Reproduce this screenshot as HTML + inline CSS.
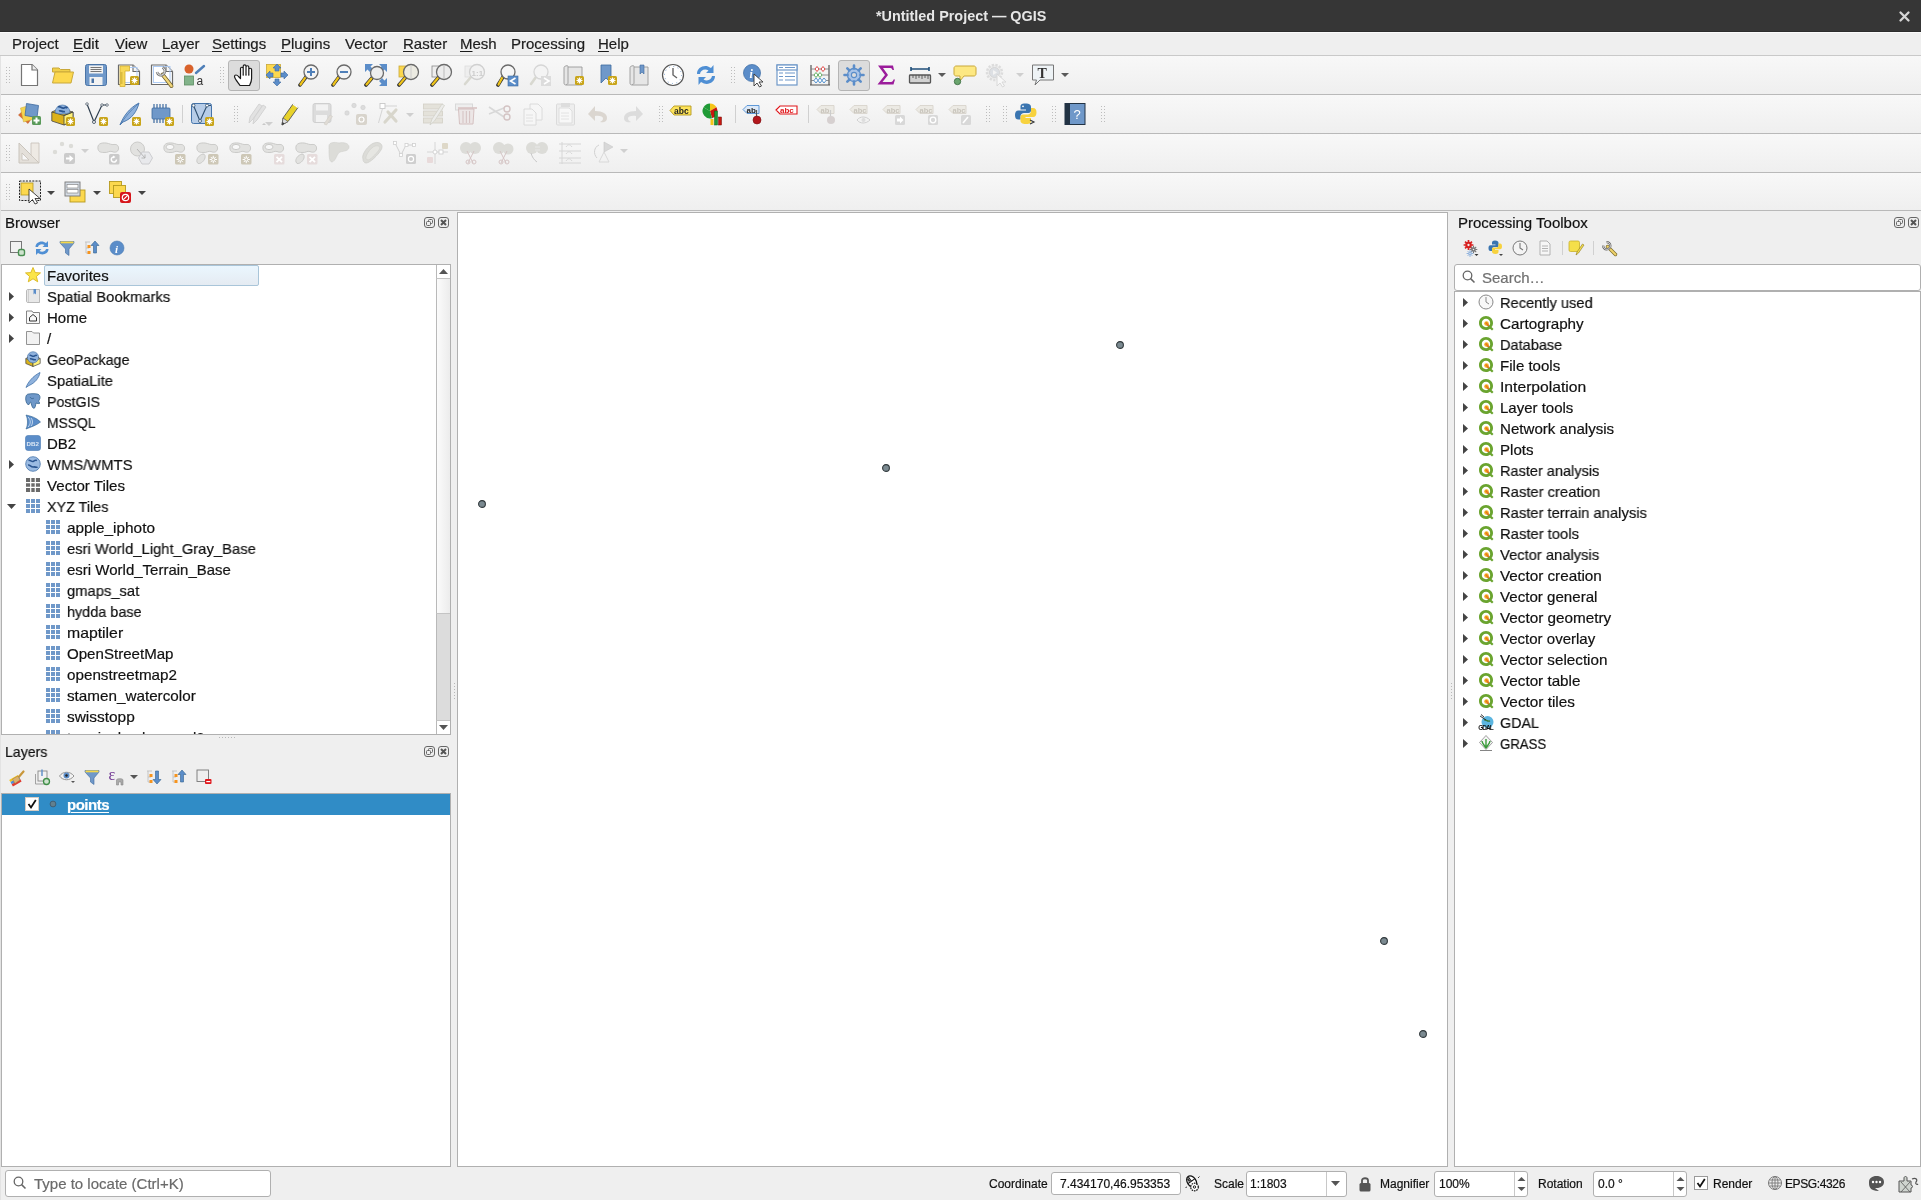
<!DOCTYPE html><html><head><meta charset="utf-8"><style>
html,body{margin:0;padding:0;width:1921px;height:1200px;overflow:hidden;background:#efefef;position:relative;font-family:"Liberation Sans", sans-serif;}
.t{position:absolute;white-space:nowrap;will-change:transform;-webkit-text-stroke:0.2px currentColor;}
svg{overflow:visible;will-change:transform}
</style></head><body>
<div style="position:absolute;left:0px;top:0px;width:1921px;height:31px;background:#363636"></div>
<div style="position:absolute;left:0px;top:31px;width:1921px;height:1px;background:#2c2c2c"></div>
<div style="position:absolute;left:0px;top:32px;width:1921px;height:1px;background:#fbfbfb"></div>
<div class="t" style="left:876px;top:8.61px;font-size:14.4px;line-height:14.4px;color:#e6e6e6;font-weight:700;-webkit-text-stroke:0;">*Untitled Project — QGIS</div>
<svg style="position:absolute;left:1899px;top:11px" width="11" height="11" viewBox="0 0 11 11"><path d="M1.5 1.5 L9.5 9.5 M9.5 1.5 L1.5 9.5" stroke="#d6d6d6" stroke-width="2.3" stroke-linecap="round"/></svg>
<div style="position:absolute;left:0px;top:33px;width:1921px;height:22px;background:#efefef"></div>
<div style="position:absolute;left:0px;top:55px;width:1921px;height:1px;background:#c9c9c9"></div>
<div class="t" style="left:12px;top:36.00px;font-size:15px;line-height:15px;color:#1c1c1c;font-weight:400;">Project</div>
<div class="t" style="left:73px;top:36.00px;font-size:15px;line-height:15px;color:#1c1c1c;font-weight:400;text-decoration-thickness:1px;text-underline-offset:2px;"><u>E</u>dit</div>
<div class="t" style="left:115px;top:36.00px;font-size:15px;line-height:15px;color:#1c1c1c;font-weight:400;text-decoration-thickness:1px;text-underline-offset:2px;"><u>V</u>iew</div>
<div class="t" style="left:162px;top:36.00px;font-size:15px;line-height:15px;color:#1c1c1c;font-weight:400;text-decoration-thickness:1px;text-underline-offset:2px;"><u>L</u>ayer</div>
<div class="t" style="left:212px;top:36.00px;font-size:15px;line-height:15px;color:#1c1c1c;font-weight:400;text-decoration-thickness:1px;text-underline-offset:2px;"><u>S</u>ettings</div>
<div class="t" style="left:281px;top:36.00px;font-size:15px;line-height:15px;color:#1c1c1c;font-weight:400;text-decoration-thickness:1px;text-underline-offset:2px;"><u>P</u>lugins</div>
<div class="t" style="left:345px;top:36.00px;font-size:15px;line-height:15px;color:#1c1c1c;font-weight:400;text-decoration-thickness:1px;text-underline-offset:2px;">Vect<u>o</u>r</div>
<div class="t" style="left:403px;top:36.00px;font-size:15px;line-height:15px;color:#1c1c1c;font-weight:400;text-decoration-thickness:1px;text-underline-offset:2px;"><u>R</u>aster</div>
<div class="t" style="left:460px;top:36.00px;font-size:15px;line-height:15px;color:#1c1c1c;font-weight:400;text-decoration-thickness:1px;text-underline-offset:2px;"><u>M</u>esh</div>
<div class="t" style="left:511px;top:36.00px;font-size:15px;line-height:15px;color:#1c1c1c;font-weight:400;text-decoration-thickness:1px;text-underline-offset:2px;">Pro<u>c</u>essing</div>
<div class="t" style="left:598px;top:36.00px;font-size:15px;line-height:15px;color:#1c1c1c;font-weight:400;text-decoration-thickness:1px;text-underline-offset:2px;"><u>H</u>elp</div>
<div style="position:absolute;left:0px;top:56px;width:1921px;height:38px;background:linear-gradient(#f8f8f8,#efefef)"></div>
<div style="position:absolute;left:0px;top:94px;width:1921px;height:1px;background:#b9b9b9"></div>
<div style="position:absolute;left:0px;top:95px;width:1921px;height:38px;background:linear-gradient(#f8f8f8,#efefef)"></div>
<div style="position:absolute;left:0px;top:133px;width:1921px;height:1px;background:#b9b9b9"></div>
<div style="position:absolute;left:0px;top:134px;width:1921px;height:38px;background:linear-gradient(#f8f8f8,#efefef)"></div>
<div style="position:absolute;left:0px;top:172px;width:1921px;height:1px;background:#b9b9b9"></div>
<div style="position:absolute;left:0px;top:173px;width:1921px;height:37px;background:linear-gradient(#f8f8f8,#efefef)"></div>
<div style="position:absolute;left:0px;top:210px;width:1921px;height:1px;background:#b9b9b9"></div>
<svg style="position:absolute;left:6px;top:67px" width="4" height="16" viewBox="0 0 4 16"><rect x="0" y="0" width="1" height="1" fill="#bdbdbd"/><rect x="3" y="0" width="1" height="1" fill="#bdbdbd"/><rect x="0" y="3" width="1" height="1" fill="#bdbdbd"/><rect x="3" y="3" width="1" height="1" fill="#bdbdbd"/><rect x="0" y="6" width="1" height="1" fill="#bdbdbd"/><rect x="3" y="6" width="1" height="1" fill="#bdbdbd"/><rect x="0" y="9" width="1" height="1" fill="#bdbdbd"/><rect x="3" y="9" width="1" height="1" fill="#bdbdbd"/><rect x="0" y="12" width="1" height="1" fill="#bdbdbd"/><rect x="3" y="12" width="1" height="1" fill="#bdbdbd"/><rect x="0" y="15" width="1" height="1" fill="#bdbdbd"/><rect x="3" y="15" width="1" height="1" fill="#bdbdbd"/></svg>
<svg style="position:absolute;left:220px;top:67px" width="4" height="16" viewBox="0 0 4 16"><rect x="0" y="0" width="1" height="1" fill="#bdbdbd"/><rect x="3" y="0" width="1" height="1" fill="#bdbdbd"/><rect x="0" y="3" width="1" height="1" fill="#bdbdbd"/><rect x="3" y="3" width="1" height="1" fill="#bdbdbd"/><rect x="0" y="6" width="1" height="1" fill="#bdbdbd"/><rect x="3" y="6" width="1" height="1" fill="#bdbdbd"/><rect x="0" y="9" width="1" height="1" fill="#bdbdbd"/><rect x="3" y="9" width="1" height="1" fill="#bdbdbd"/><rect x="0" y="12" width="1" height="1" fill="#bdbdbd"/><rect x="3" y="12" width="1" height="1" fill="#bdbdbd"/><rect x="0" y="15" width="1" height="1" fill="#bdbdbd"/><rect x="3" y="15" width="1" height="1" fill="#bdbdbd"/></svg>
<svg style="position:absolute;left:731px;top:67px" width="4" height="16" viewBox="0 0 4 16"><rect x="0" y="0" width="1" height="1" fill="#bdbdbd"/><rect x="3" y="0" width="1" height="1" fill="#bdbdbd"/><rect x="0" y="3" width="1" height="1" fill="#bdbdbd"/><rect x="3" y="3" width="1" height="1" fill="#bdbdbd"/><rect x="0" y="6" width="1" height="1" fill="#bdbdbd"/><rect x="3" y="6" width="1" height="1" fill="#bdbdbd"/><rect x="0" y="9" width="1" height="1" fill="#bdbdbd"/><rect x="3" y="9" width="1" height="1" fill="#bdbdbd"/><rect x="0" y="12" width="1" height="1" fill="#bdbdbd"/><rect x="3" y="12" width="1" height="1" fill="#bdbdbd"/><rect x="0" y="15" width="1" height="1" fill="#bdbdbd"/><rect x="3" y="15" width="1" height="1" fill="#bdbdbd"/></svg>
<div style="position:absolute;left:228px;top:60px;width:32px;height:31px;background:#dcdcdc;border:1px solid #b5b5b5;border-radius:3px;box-sizing:border-box"></div>
<div style="position:absolute;left:838px;top:60px;width:32px;height:31px;background:#dcdcdc;border:1px solid #b5b5b5;border-radius:3px;box-sizing:border-box"></div>
<svg style="position:absolute;left:18px;top:63px" width="24" height="24" viewBox="0 0 24 24"><path d="M3.5 1.5 H14 L19.5 7 V22.5 H3.5 Z" fill="#fff" stroke="#757575" stroke-width="1.2" stroke-linejoin="round"/><path d="M14 1.5 V7 H19.5" fill="#eee" stroke="#757575" stroke-width="1.2"/></svg>
<svg style="position:absolute;left:51px;top:63px" width="24" height="24" viewBox="0 0 24 24"><path d="M1.5 5 H8 L9.5 6.5 H19 V9 H1.5 Z" fill="#f1d04a" stroke="#c9a83a" stroke-width="1"/><path d="M1.5 20 L4 9 H22.5 L20 20 Z" fill="#fcd84e" stroke="#c9a83a" stroke-width="1"/></svg>
<svg style="position:absolute;left:84px;top:63px" width="24" height="24" viewBox="0 0 24 24"><rect x="1.5" y="1.5" width="21" height="21" rx="2" fill="#6f98c9" stroke="#4a74a6" stroke-width="1"/><rect x="5" y="2.5" width="14" height="8" fill="#f2f2f2"/><path d="M6.5 4.5 H17.5 M6.5 6.5 H17.5 M6.5 8.5 H17.5" stroke="#555" stroke-width="0.8"/><rect x="5.5" y="14" width="13" height="8" fill="#f2f2f2"/><rect x="7.5" y="15.5" width="2.5" height="4.5" fill="#4a74a6"/></svg>
<svg style="position:absolute;left:117px;top:63px" width="24" height="24" viewBox="0 0 24 24"><path d="M1.5 2 H16 L22.5 8.5 V21.5 H1.5 Z" fill="#fff" stroke="#6a6a6a" stroke-width="1.2" stroke-linejoin="round"/><path d="M16 2 V8.5 H22.5" fill="#f4f4f4" stroke="#6a6a6a" stroke-width="1.1"/><rect x="5" y="4.5" width="15" height="15" fill="none" stroke="#a8c8f4" stroke-width="0.9"/><path d="M3 3 H12.5 V8 H8 V23.5 H3 Z" fill="#f7d858" stroke="#d4b030" stroke-width="0.8"/><path d="M3.5 10 H5.5 M3.5 12 H5.5 M3.5 14 H5.5 M3.5 16 H5.5 M3.5 18 H5.5 M3.5 20 H5.5" stroke="#a88a1a" stroke-width="0.7"/><rect x="13" y="13" width="9" height="9" rx="1.5" fill="#c9a51a"/><path d="M17.5 14.5 V20.5 M14.5 17.5 H20.5 M15.4 15.4 L19.6 19.6 M19.6 15.4 L15.4 19.6" stroke="#fff" stroke-width="1.1"/></svg>
<svg style="position:absolute;left:150px;top:63px" width="24" height="24" viewBox="0 0 24 24"><path d="M1.5 2 H16 L22.5 8.5 V21.5 H1.5 Z" fill="#fff" stroke="#6a6a6a" stroke-width="1.2" stroke-linejoin="round"/><path d="M16 2 V8.5 H22.5" fill="#f4f4f4" stroke="#6a6a6a" stroke-width="1.1"/><rect x="3.5" y="3.5" width="16.5" height="16" fill="none" stroke="#a8c8f4" stroke-width="0.9"/><path d="M12.5 11.5 L21.5 23" stroke="#6a5a2a" stroke-width="3.8" stroke-linecap="round"/><path d="M12.5 11.5 L21.5 23" stroke="#f0d67a" stroke-width="2.4" stroke-linecap="round"/><path d="M7 9 A4 4 0 1 0 12.5 4.5" fill="none" stroke="#777" stroke-width="2.6"/><path d="M7 9 A4 4 0 1 0 12.5 4.5" fill="none" stroke="#eee" stroke-width="1"/></svg>
<svg style="position:absolute;left:183px;top:63px" width="24" height="24" viewBox="0 0 24 24"><circle cx="6" cy="6" r="4.5" fill="#d9622b"/><path d="M13 10 L21 3" stroke="#4f7fb8" stroke-width="2.4" stroke-linecap="round"/><rect x="1.5" y="13" width="9" height="9" fill="#82b38a" stroke="#5c8e63" stroke-width="0.8"/><text x="13.5" y="21.5" font-family="Liberation Sans" font-size="12" fill="#333">a</text></svg>
<svg style="position:absolute;left:232px;top:63px" width="24" height="24" viewBox="0 0 24 24"><path d="M8 22.5 C6 19.5 2.5 15.5 2.5 13.5 C2.5 11.5 5 11.5 6.5 13.5 L8.5 15.5 V5.5 C8.5 3.8 11.2 3.8 11.2 5.5 V11.5 V3.2 C11.2 1.4 14 1.4 14 3.2 V11.5 V4 C14 2.3 16.8 2.3 16.8 4 V11.5 V6.5 C16.8 4.8 19.6 4.8 19.6 6.5 V15.5 C19.6 18.5 18.5 20.5 17.5 22.5 Z" fill="#fff" stroke="#1a1a1a" stroke-width="1.2" stroke-linejoin="round"/><path d="M11.2 11.5 V13 M14 11.5 V13 M16.8 11.5 V13" stroke="#1a1a1a" stroke-width="0.8"/></svg>
<svg style="position:absolute;left:265px;top:63px" width="24" height="24" viewBox="0 0 24 24"><rect x="1.5" y="1.5" width="14" height="13" fill="#fcd84e" stroke="#c9a83a" stroke-width="0.8"/><g fill="#5b8dc9" stroke="#3d6a9f" stroke-width="0.6"><path d="M12 1 L16 5 H14 V8 H10 V5 H8 Z"/><path d="M12 23 L16 19 H14 V16 H10 V19 H8 Z"/><path d="M1 12 L5 8 V10 H8 V14 H5 V16 Z"/><path d="M23 12 L19 8 V10 H16 V14 H19 V16 Z"/></g></svg>
<svg style="position:absolute;left:298px;top:63px" width="24" height="24" viewBox="0 0 24 24"><path d="M8.100000000000001 13.899999999999999 L2 22" stroke="#333" stroke-width="3.6" stroke-linecap="round"/><path d="M7.100000000000001 14.899999999999999 L2.5 21.5" stroke="#f0c419" stroke-width="2.2" stroke-linecap="round"/><circle cx="13" cy="9" r="7" fill="#f4f4f4" stroke="#6a6a6a" stroke-width="1.3"/><path d="M9 9 H17 M13 5 V13" stroke="#4f7fb8" stroke-width="2"/></svg>
<svg style="position:absolute;left:331px;top:63px" width="24" height="24" viewBox="0 0 24 24"><path d="M8.100000000000001 13.899999999999999 L2 22" stroke="#333" stroke-width="3.6" stroke-linecap="round"/><path d="M7.100000000000001 14.899999999999999 L2.5 21.5" stroke="#f0c419" stroke-width="2.2" stroke-linecap="round"/><circle cx="13" cy="9" r="7" fill="#f4f4f4" stroke="#6a6a6a" stroke-width="1.3"/><path d="M9 9 H17" stroke="#4f7fb8" stroke-width="2"/></svg>
<svg style="position:absolute;left:364px;top:63px" width="24" height="24" viewBox="0 0 24 24"><g fill="#5b8dc9"><path d="M1 1 H9 L6.5 3.5 L9 6 L6 9 L3.5 6.5 L1 9 Z"/><path d="M23 1 H15 L17.5 3.5 L15 6 L18 9 L20.5 6.5 L23 9 Z"/><path d="M23 23 H15 L17.5 20.5 L15 18 L18 15 L20.5 17.5 L23 15 Z"/></g><path d="M8.45 14.55 L2 22" stroke="#333" stroke-width="3.6" stroke-linecap="round"/><path d="M7.449999999999999 15.55 L2.5 21.5" stroke="#f0c419" stroke-width="2.2" stroke-linecap="round"/><circle cx="13" cy="10" r="6.5" fill="#eeeeee" stroke="#6a6a6a" stroke-width="1.3"/></svg>
<svg style="position:absolute;left:397px;top:63px" width="24" height="24" viewBox="0 0 24 24"><rect x="2" y="3" width="9" height="11" fill="#fcd84e" stroke="#c9a83a" stroke-width="0.8"/><path d="M8.75 14.25 L2 22" stroke="#333" stroke-width="3.6" stroke-linecap="round"/><path d="M7.75 15.25 L2.5 21.5" stroke="#f0c419" stroke-width="2.2" stroke-linecap="round"/><circle cx="14" cy="9" r="7.5" fill="#ecebe2" stroke="#6a6a6a" stroke-width="1.3"/><path d="M14 2 V16" stroke="#ccc" stroke-width="1"/></svg>
<svg style="position:absolute;left:430px;top:63px" width="24" height="24" viewBox="0 0 24 24"><rect x="2" y="3" width="9" height="11" fill="#eee" stroke="#888" stroke-width="0.8"/><path d="M8.75 14.25 L2 22" stroke="#333" stroke-width="3.6" stroke-linecap="round"/><path d="M7.75 15.25 L2.5 21.5" stroke="#f0c419" stroke-width="2.2" stroke-linecap="round"/><circle cx="14" cy="9" r="7.5" fill="#ececec" stroke="#6a6a6a" stroke-width="1.3"/><path d="M14 2 V16" stroke="#bbb" stroke-width="1"/></svg>
<svg style="position:absolute;left:463px;top:63px" width="24" height="24" viewBox="0 0 24 24"><rect x="2" y="3" width="9" height="11" fill="#eee" stroke="#ddd" stroke-width="0.8"/><path d="M8 14 L2 21" stroke="#d8d8d0" stroke-width="2.6" stroke-linecap="round"/><circle cx="14" cy="9" r="7.5" fill="#f2f2f2" stroke="#d0d0d0" stroke-width="1.3"/><text x="8.6" y="12.5" font-family="Liberation Sans" font-weight="700" font-size="8" fill="#ccc">1:1</text></svg>
<svg style="position:absolute;left:496px;top:63px" width="24" height="24" viewBox="0 0 24 24"><path d="M7.1000000000000005 13.899999999999999 L2 22" stroke="#333" stroke-width="3.6" stroke-linecap="round"/><path d="M6.1000000000000005 14.899999999999999 L2.5 21.5" stroke="#f0c419" stroke-width="2.2" stroke-linecap="round"/><circle cx="12" cy="9" r="7" fill="#f6f6f6" stroke="#6a6a6a" stroke-width="1.3"/><rect x="12" y="13" width="10" height="10" fill="#5b8dc9" stroke="#3d6a9f" stroke-width="0.6"/><path d="M19.5 15 L14.5 18 L19.5 21" fill="none" stroke="#fff" stroke-width="1.6"/></svg>
<svg style="position:absolute;left:529px;top:63px" width="24" height="24" viewBox="0 0 24 24"><path d="M7 14 L2 21" stroke="#d8d8d0" stroke-width="2.6" stroke-linecap="round"/><circle cx="12" cy="9" r="7" fill="#f4f4f4" stroke="#d6d6d6" stroke-width="1.3"/><rect x="12" y="13" width="10" height="10" fill="#dcdcdc"/><path d="M15 15 L20 18 L15 21" fill="none" stroke="#fff" stroke-width="1.6"/></svg>
<svg style="position:absolute;left:562px;top:63px" width="24" height="24" viewBox="0 0 24 24"><path d="M4 3 C2.5 3 2 4 2 5 V20 C2 21.5 3 22 4 22 H20 V4 H6 C6 3 5.5 2 4 3 Z" fill="#e6e6e6" stroke="#9a9a9a" stroke-width="0.9"/><path d="M6 4 V20 C6 21 5 21.5 4 21.5" fill="none" stroke="#9a9a9a" stroke-width="0.9"/><rect x="13" y="13" width="9" height="9" rx="1.5" fill="#c9a51a"/><path d="M17.5 14.5 V20.5 M14.5 17.5 H20.5 M15.4 15.4 L19.6 19.6 M19.6 15.4 L15.4 19.6" stroke="#fff" stroke-width="1.1"/></svg>
<svg style="position:absolute;left:595px;top:63px" width="24" height="24" viewBox="0 0 24 24"><path d="M6 2 H16 V20 L11 15 L6 20 Z" fill="#6f98c9" stroke="#3d6a9f" stroke-width="0.8"/><rect x="13" y="13" width="9" height="9" rx="1.5" fill="#c9a51a"/><path d="M17.5 14.5 V20.5 M14.5 17.5 H20.5 M15.4 15.4 L19.6 19.6 M19.6 15.4 L15.4 19.6" stroke="#fff" stroke-width="1.1"/></svg>
<svg style="position:absolute;left:628px;top:63px" width="24" height="24" viewBox="0 0 24 24"><path d="M4 3 C2.5 3 2 4 2 5 V20 C2 21.5 3 22 4 22 H20 V4 H6 C6 3 5.5 2 4 3 Z" fill="#e6e6e6" stroke="#9a9a9a" stroke-width="0.9"/><path d="M6 4 V20 C6 21 5 21.5 4 21.5" fill="none" stroke="#9a9a9a" stroke-width="0.9"/><path d="M12 2 H16 V11 L14 9 L12 11 Z" fill="#6f98c9" stroke="#3d6a9f" stroke-width="0.6"/></svg>
<svg style="position:absolute;left:661px;top:63px" width="24" height="24" viewBox="0 0 24 24"><circle cx="12" cy="12" r="10.5" fill="#fff" stroke="#555" stroke-width="1.2"/><circle cx="12" cy="12" r="8.5" fill="none" stroke="#6f98c9" stroke-width="0.9" stroke-dasharray="1 3.45"/><path d="M12 5 V12 L16 15" fill="none" stroke="#666" stroke-width="1.4"/></svg>
<svg style="position:absolute;left:694px;top:63px" width="24" height="24" viewBox="0 0 24 24"><path d="M3 11 C3 5 9 2 14 3.5 L17 5 L19.5 2 V10 H12 L14.5 7.5 C11 5.5 6.5 7 6 11 Z" fill="#4f8fd4"/><path d="M21 13 C21 19 15 22 10 20.5 L7 19 L4.5 22 V14 H12 L9.5 16.5 C13 18.5 17.5 17 18 13 Z" fill="#4f8fd4"/></svg>
<svg style="position:absolute;left:742px;top:63px" width="24" height="24" viewBox="0 0 24 24"><circle cx="10" cy="10" r="8.5" fill="#5b8dc9" stroke="#4574aa" stroke-width="0.8"/><text x="7.5" y="15" font-family="Liberation Serif" font-style="italic" font-weight="700" font-size="12" fill="#fff">i</text><path d="M12 11 V23 L15 20 L17.5 24 L19.5 23 L17 19 H21 Z" fill="#fff" stroke="#333" stroke-width="0.9" stroke-linejoin="round"/></svg>
<svg style="position:absolute;left:775px;top:63px" width="24" height="24" viewBox="0 0 24 24"><rect x="2" y="2" width="20" height="20" fill="#fff" stroke="#6f98c9" stroke-width="1.2"/><rect x="2" y="2" width="20" height="5" fill="#fff" stroke="#6f98c9" stroke-width="1.2"/><g stroke="#6f98c9" stroke-width="1.2"><path d="M4 4.5 H8 M10 4.5 H20 M4 10 H8 M10 10 H20 M4 13.5 H8 M10 13.5 H20 M4 17 H8 M10 17 H20"/></g></svg>
<svg style="position:absolute;left:808px;top:63px" width="24" height="24" viewBox="0 0 24 24"><path d="M3 2 V22 M21 2 V22 M2 22 H22" stroke="#555" stroke-width="1.2"/><path d="M3 6 H21 M3 12 H21 M3 17.5 H21" stroke="#777" stroke-width="0.8"/><g stroke-width="0.9" fill="#fff"><path d="M9 3.5 L11 6 L9 8.5 L7 6 Z M15 3.5 L17 6 L15 8.5 L13 6 Z" stroke="#d33"/><path d="M8 9.5 L10 12 L8 14.5 L6 12 Z M12 9.5 L14 12 L12 14.5 L10 12 Z" stroke="#5a5"/><path d="M8 15 L10 17.5 L8 20 L6 17.5 Z M12 15 L14 17.5 L12 20 L10 17.5 Z M16 15 L18 17.5 L16 20 L14 17.5 Z" stroke="#48c"/></g></svg>
<svg style="position:absolute;left:842px;top:63px" width="24" height="24" viewBox="0 0 24 24"><circle cx="12" cy="12" r="6.5" fill="#a9c4e8" stroke="#5b8dc9" stroke-width="1.3"/><circle cx="12" cy="12" r="2.6" fill="#dcdcdc" stroke="#5b8dc9" stroke-width="1.1"/><g stroke="#5b8dc9" stroke-width="2.6" stroke-linecap="round"><path d="M12 2.5 V5.5 M12 18.5 V21.5 M2.5 12 H5.5 M18.5 12 H21.5 M5.3 5.3 L7.4 7.4 M16.6 16.6 L18.7 18.7 M5.3 18.7 L7.4 16.6 M16.6 7.4 L18.7 5.3"/></g></svg>
<svg style="position:absolute;left:874px;top:63px" width="24" height="24" viewBox="0 0 24 24"><path d="M4 2.5 H19 L20 7 H18.5 C18 5.2 17 5 15 5 H9 L14 12 L8.5 19 H16 C18 19 19 18.5 19.5 16.5 H21 L19.5 21.5 H3.5 L11 12 Z" fill="#9b1c9b"/></svg>
<svg style="position:absolute;left:908px;top:63px" width="24" height="24" viewBox="0 0 24 24"><path d="M3 4 V8 M21 4 V8 M3 6 H21" stroke="#1f4e79" stroke-width="1.6"/><rect x="1.5" y="12" width="21" height="8" rx="0.8" fill="#d2d2d2" stroke="#555" stroke-width="1.3"/><path d="M5 12 V15 M8 12 V16 M11 12 V15 M14 12 V16 M17 12 V15 M20 12 V16" stroke="#555" stroke-width="0.9"/></svg>
<svg style="position:absolute;left:953px;top:63px" width="24" height="24" viewBox="0 0 24 24"><path d="M3 3 H21 C22 3 23 4 23 5 V11 C23 12 22 13 21 13 H11 L7 18 V13 H3 C2 13 1 12 1 11 V5 C1 4 2 3 3 3 Z" fill="#fde882" stroke="#c9a83a" stroke-width="1"/><circle cx="4.5" cy="18.5" r="3.2" fill="#6aa56e" stroke="#3f6f45" stroke-width="0.9"/></svg>
<svg style="position:absolute;left:985px;top:63px" width="24" height="24" viewBox="0 0 24 24"><circle cx="9.5" cy="9.5" r="7.5" fill="#ececec" stroke="#dcdcdc" stroke-width="2.5" stroke-dasharray="2.2 1.4"/><circle cx="9.5" cy="9.5" r="5" fill="#dde0e4" stroke="#d0d0d0" stroke-width="0.8"/><path d="M8 7 L12 9.5 L8 12 Z" fill="#f4f4f4"/><path d="M12 11 V23 L15 20 L17.5 24 L19.5 23 L17 19 H21 Z" fill="#f8f8f8" stroke="#d6d6d6" stroke-width="0.9"/></svg>
<svg style="position:absolute;left:1031px;top:63px" width="24" height="24" viewBox="0 0 24 24"><path d="M1.5 2 H22.5 V17 H9 L4 22 L5.5 17 H1.5 Z" fill="#eef3f6" stroke="#777" stroke-width="1"/><text x="6.5" y="14.5" font-family="Liberation Serif" font-weight="700" font-size="14" fill="#333">T</text></svg>
<svg style="position:absolute;left:938px;top:73px" width="8" height="5" viewBox="0 0 8 5"><path d="M0 0 H8 L4 4 Z" fill="#5a5a5a"/></svg>
<svg style="position:absolute;left:1016px;top:73px" width="8" height="5" viewBox="0 0 8 5"><path d="M0 0 H8 L4 4 Z" fill="#cfcfcf"/></svg>
<svg style="position:absolute;left:1061px;top:73px" width="8" height="5" viewBox="0 0 8 5"><path d="M0 0 H8 L4 4 Z" fill="#5a5a5a"/></svg>
<svg style="position:absolute;left:6px;top:106px" width="4" height="16" viewBox="0 0 4 16"><rect x="0" y="0" width="1" height="1" fill="#bdbdbd"/><rect x="3" y="0" width="1" height="1" fill="#bdbdbd"/><rect x="0" y="3" width="1" height="1" fill="#bdbdbd"/><rect x="3" y="3" width="1" height="1" fill="#bdbdbd"/><rect x="0" y="6" width="1" height="1" fill="#bdbdbd"/><rect x="3" y="6" width="1" height="1" fill="#bdbdbd"/><rect x="0" y="9" width="1" height="1" fill="#bdbdbd"/><rect x="3" y="9" width="1" height="1" fill="#bdbdbd"/><rect x="0" y="12" width="1" height="1" fill="#bdbdbd"/><rect x="3" y="12" width="1" height="1" fill="#bdbdbd"/><rect x="0" y="15" width="1" height="1" fill="#bdbdbd"/><rect x="3" y="15" width="1" height="1" fill="#bdbdbd"/></svg>
<svg style="position:absolute;left:18px;top:102px" width="24" height="24" viewBox="0 0 24 24"><path d="M0.5 13 L9 5 L17 11 L10 21.5 Z" fill="#dd6b2f" stroke="#b4531f" stroke-width="0.5"/><path d="M2.5 6 L13 3 L16 17 L5.5 20 Z" fill="#f5d44f" stroke="#c9a83a" stroke-width="0.5"/><path d="M8.5 1.5 L20.5 3.5 L19 15.5 L7 13.5 Z" fill="#6f98c9" stroke="#3d6a9f" stroke-width="0.8"/><rect x="14" y="14" width="9" height="9" rx="1.5" fill="#5a9a5a"/><path d="M18.5 15.5 V21.5 M15.5 18.5 H21.5" stroke="#fff" stroke-width="2"/></svg>
<svg style="position:absolute;left:51px;top:102px" width="24" height="24" viewBox="0 0 24 24"><path d="M0.8 10 L8.5 6.5 L22 10 V18 L13 23 L0.8 19 Z" fill="#dcb21a" stroke="#444" stroke-width="0.8"/><path d="M13 13.5 V23 L22 18 V10 Z" fill="#fdf07a" stroke="#444" stroke-width="0.8"/><path d="M0.8 10 L13 13.5 L22 10" fill="none" stroke="#444" stroke-width="0.8"/><path d="M4 10.5 A7.5 7.5 0 1 1 19 10.5 C15 12.5 8 12.5 4 10.5 Z" fill="#8fb2dd" stroke="#3a6aa0" stroke-width="0.6"/><path d="M7 5 C9 3.5 10.5 7 13 6 C14 5.5 15 4.5 16.5 6 M8 9 C10 8 11 10.5 14 9.5" stroke="#2a5590" stroke-width="1.8" fill="none"/><rect x="15" y="15" width="9" height="9" rx="1.5" fill="#c9a51a"/><path d="M19.5 16.5 V22.5 M16.5 19.5 H22.5 M17.4 17.4 L21.6 21.6 M21.6 17.4 L17.4 21.6" stroke="#fff" stroke-width="1.1"/></svg>
<svg style="position:absolute;left:84px;top:102px" width="24" height="24" viewBox="0 0 24 24"><path d="M3 2 L10 20 L18 3 L23 3" fill="none" stroke="#2f3f4f" stroke-width="1.2"/><g fill="#fff" stroke="#2f3f4f" stroke-width="0.8"><path d="M3 0.5 L4.5 2 L3 3.5 L1.5 2 Z"/><path d="M18 1.5 L19.5 3 L18 4.5 L16.5 3 Z"/><path d="M23 1.5 L24.5 3 L23 4.5 L21.5 3 Z"/><circle cx="10" cy="20" r="1.5"/></g><rect x="15" y="15" width="9" height="9" rx="1.5" fill="#c9a51a"/><path d="M19.5 16.5 V22.5 M16.5 19.5 H22.5 M17.4 17.4 L21.6 21.6 M21.6 17.4 L17.4 21.6" stroke="#fff" stroke-width="1.1"/></svg>
<svg style="position:absolute;left:117px;top:102px" width="24" height="24" viewBox="0 0 24 24"><path d="M3 23 C6 15 12 6 22 1 C20 9 15 17 6 20 Z" fill="#8fb2dd" stroke="#4574aa" stroke-width="0.9"/><path d="M3 23 C8 15 14 8 21 2" stroke="#4574aa" stroke-width="0.7" fill="none"/><rect x="15" y="15" width="9" height="9" rx="1.5" fill="#c9a51a"/><path d="M19.5 16.5 V22.5 M16.5 19.5 H22.5 M17.4 17.4 L21.6 21.6 M21.6 17.4 L17.4 21.6" stroke="#fff" stroke-width="1.1"/></svg>
<svg style="position:absolute;left:150px;top:102px" width="24" height="24" viewBox="0 0 24 24"><rect x="2" y="6" width="18" height="11" rx="1" fill="#6f98c9" stroke="#3d6a9f" stroke-width="0.8"/><path d="M4 2 V6 M7 2 V6 M10 2 V6 M13 2 V6 M16 2 V6 M4 17 V21 M7 17 V21 M10 17 V21 M13 17 V21 M16 17 V21" stroke="#3d6a9f" stroke-width="1.2"/><rect x="15" y="15" width="9" height="9" rx="1.5" fill="#c9a51a"/><path d="M19.5 16.5 V22.5 M16.5 19.5 H22.5 M17.4 17.4 L21.6 21.6 M21.6 17.4 L17.4 21.6" stroke="#fff" stroke-width="1.1"/></svg>
<svg style="position:absolute;left:190px;top:102px" width="24" height="24" viewBox="0 0 24 24"><rect x="1.5" y="1.5" width="20" height="20" rx="2" fill="#b7cde8" stroke="#4574aa" stroke-width="1"/><path d="M3.5 3.5 L10 19 L17 3.5 H21" fill="none" stroke="#2f4f6f" stroke-width="1.1"/><g fill="#fff" stroke="#2f4f6f" stroke-width="0.8"><circle cx="3.5" cy="3.5" r="1.5"/><circle cx="17" cy="3.5" r="1.5"/><circle cx="10" cy="19" r="1.5"/></g><rect x="15" y="15" width="9" height="9" rx="1.5" fill="#c9a51a"/><path d="M19.5 16.5 V22.5 M16.5 19.5 H22.5 M17.4 17.4 L21.6 21.6 M21.6 17.4 L17.4 21.6" stroke="#fff" stroke-width="1.1"/></svg>
<svg style="position:absolute;left:246px;top:102px" width="24" height="24" viewBox="0 0 24 24"><g fill="#e2e2e2" stroke="#d0d0d0" stroke-width="0.9"><path d="M3 21 L4 15 L13 2 L16 4 L7 17 Z"/><path d="M7 22 L8 16 L17 3 L20 5 L11 18 Z"/></g><path d="M16 23 L18 21 L20 23 Z" fill="#c8c8c8"/></svg>
<svg style="position:absolute;left:278px;top:102px" width="24" height="24" viewBox="0 0 24 24"><path d="M4 23 L5 16 L15 2 L20 5.5 L10 19.5 Z" fill="#e8d22a" stroke="#555" stroke-width="0.9"/><path d="M4 23 L5 16 L10 19.5 Z" fill="#ddd" stroke="#555" stroke-width="0.7"/><path d="M4 23 L4.5 20 L6.5 21.5 Z" fill="#333"/><path d="M15 2 L20 5.5" stroke="#fff" stroke-width="1.5"/></svg>
<svg style="position:absolute;left:311px;top:102px" width="24" height="24" viewBox="0 0 24 24"><rect x="2" y="1.5" width="18" height="19" rx="2" fill="#dcdcdc" stroke="#cfcfcf"/><rect x="5" y="2.5" width="12" height="6" fill="#f2f2f2"/><rect x="5" y="13" width="11" height="7" fill="#f2f2f2"/><path d="M13 22 L19 13 L21.5 14.5 L15.5 23 Z" fill="#e0dcd6" stroke="#d0ccc6" stroke-width="0.6"/></svg>
<svg style="position:absolute;left:344px;top:102px" width="24" height="24" viewBox="0 0 24 24"><g fill="#dcdcdc" stroke="#cfcfcf" stroke-width="0.6"><circle cx="10" cy="3.5" r="2.2"/><circle cx="19" cy="5.5" r="2.2"/><circle cx="3" cy="11" r="2.2"/></g><rect x="12" y="12" width="11" height="11" rx="2" fill="#d8d4cc"/><circle cx="17.5" cy="17.5" r="2.5" fill="none" stroke="#fff" stroke-width="1.2"/></svg>
<svg style="position:absolute;left:377px;top:102px" width="24" height="24" viewBox="0 0 24 24"><rect x="3" y="1.5" width="5" height="5" fill="#fff" stroke="#c8c8c8" stroke-width="0.9"/><path d="M8 4 H20 M5.5 6.5 L1.5 21" stroke="#d0d0d0" stroke-width="0.9"/><path d="M8 20 L19 8 M11 10 L19 19" stroke="#d8d6cc" stroke-width="3.2" stroke-linecap="round"/></svg>
<svg style="position:absolute;left:422px;top:102px" width="24" height="24" viewBox="0 0 24 24"><g fill="#e4e2da" stroke="#d3d0c6" stroke-width="0.8"><rect x="1.5" y="2" width="19" height="5"/><rect x="1.5" y="9" width="19" height="5"/><rect x="1.5" y="16" width="19" height="5"/></g><path d="M8 23 L10 17 L20 2 L22.5 3.5 L12.5 19 Z" fill="#ececea" stroke="#d0d0c8" stroke-width="0.8"/></svg>
<svg style="position:absolute;left:454px;top:102px" width="24" height="24" viewBox="0 0 24 24"><rect x="1.5" y="2" width="17" height="6" fill="#eee" stroke="#d8d8d8"/><path d="M4 6 H23" stroke="#d9c4c4" stroke-width="1.6"/><path d="M4.5 7 H20 L19 22 H5.5 Z" fill="#ece6e6" stroke="#d4c0c0" stroke-width="1"/><path d="M9 9 V21 M12.3 9 V21 M15.6 9 V21" stroke="#d4c0c0" stroke-width="1"/></svg>
<svg style="position:absolute;left:488px;top:102px" width="24" height="24" viewBox="0 0 24 24"><path d="M1 5 L16 15 M1 12 L16 6" stroke="#d8d8d8" stroke-width="1.6"/><circle cx="19" cy="7" r="3" fill="none" stroke="#d4c4c4" stroke-width="1.4"/><circle cx="19" cy="15" r="3" fill="none" stroke="#d4c4c4" stroke-width="1.4"/></svg>
<svg style="position:absolute;left:521px;top:102px" width="24" height="24" viewBox="0 0 24 24"><path d="M9 2 H17 L21 6 V18 H9 Z" fill="#f6f6f6" stroke="#d8d8d8" stroke-width="0.9"/><path d="M3 7 H11 L15 11 V23 H3 Z" fill="#f6f6f6" stroke="#d8d8d8" stroke-width="0.9"/><path d="M5 13 H12 M5 16 H12 M5 19 H12" stroke="#ddd" stroke-width="0.8"/></svg>
<svg style="position:absolute;left:554px;top:102px" width="24" height="24" viewBox="0 0 24 24"><rect x="2.5" y="2" width="18" height="21" rx="1" fill="#eee" stroke="#d8d8d8" stroke-width="0.9"/><rect x="7" y="1" width="9" height="4" fill="#ddd"/><path d="M5 6 H15 L18 9 V21 H5 Z" fill="#f8f8f8" stroke="#d8d8d8" stroke-width="0.8"/><path d="M7 11 H15 M7 14 H15 M7 17 H15" stroke="#ddd" stroke-width="0.8"/></svg>
<svg style="position:absolute;left:587px;top:102px" width="24" height="24" viewBox="0 0 24 24"><path d="M1 12 L8 4 V9 C16 9 20 12 20 16 C20 20 16 21 13 20 C15 19 16 18 16 16.5 C16 14.5 13 13.5 8 14 V19 Z" fill="#dbd6d0"/></svg>
<svg style="position:absolute;left:620px;top:102px" width="24" height="24" viewBox="0 0 24 24"><path d="M23 12 L16 4 V9 C8 9 4 12 4 16 C4 20 8 21 11 20 C9 19 8 18 8 16.5 C8 14.5 11 13.5 16 14 V19 Z" fill="#dcdcdc"/></svg>
<svg style="position:absolute;left:669px;top:102px" width="24" height="24" viewBox="0 0 24 24"><path d="M1 8.5 L5 4 H22 V13 H5 Z" fill="#fde35a" stroke="#b69a1f" stroke-width="0.9"/><text x="5" y="12" font-family="Liberation Sans" font-weight="700" font-size="8.5" fill="#222">abc</text></svg>
<svg style="position:absolute;left:702px;top:102px" width="24" height="24" viewBox="0 0 24 24"><path d="M8 9 L8 1.5 A7.5 7.5 0 0 1 14.5 5.3 Z" fill="#f5c518"/><path d="M8 9 L14.5 5.3 A7.5 7.5 0 0 1 10 16.2 Z" fill="#c8170f"/><path d="M8 9 L10 16.2 A7.5 7.5 0 0 1 1.5 5.3 Z" fill="#1f9a36"/><path d="M8 9 L1.5 5.3 A7.5 7.5 0 0 1 8 1.5 Z" fill="#1f9a36"/><rect x="8.5" y="17" width="3" height="6" fill="#f5c518"/><rect x="12.5" y="9" width="3" height="14" fill="#1f9a36" stroke="#0d5a1d" stroke-width="0.5"/><rect x="16.5" y="15" width="3" height="8" fill="#c8170f" stroke="#6a0c07" stroke-width="0.5"/></svg>
<svg style="position:absolute;left:742px;top:102px" width="24" height="24" viewBox="0 0 24 24"><path d="M1 7.5 L5 3.5 H17 V11.5 H5 Z" fill="#dce9f8" stroke="#4f8fd4" stroke-width="0.9"/><text x="4.5" y="10.5" font-family="Liberation Sans" font-weight="700" font-size="8" fill="#222">ab</text><path d="M14.5 8 V16" stroke="#555" stroke-width="1.2"/><circle cx="15" cy="18" r="4" fill="#b3161b" stroke="#7a0f12" stroke-width="0.6"/></svg>
<svg style="position:absolute;left:775px;top:102px" width="24" height="24" viewBox="0 0 24 24"><path d="M1 8 L5 4 H22 V12 H5 Z" fill="#fff" stroke="#e0161b" stroke-width="1.1"/><text x="5" y="11.3" font-family="Liberation Sans" font-weight="700" font-size="8" fill="#e0161b">abc</text></svg>
<svg style="position:absolute;left:816px;top:102px" width="24" height="24" viewBox="0 0 24 24"><path d="M1 7.5 L5 3.5 H18 V11.5 H5 Z" fill="#eceae4" stroke="#d8d4cc" stroke-width="0.9"/><text x="4.5" y="10.5" font-family="Liberation Sans" font-weight="700" font-size="7.5" fill="#c8c4bc">ab</text><path d="M14.5 8 V16" stroke="#ccc" stroke-width="1.2"/><circle cx="15" cy="18" r="4" fill="#d6d0d0"/></svg>
<svg style="position:absolute;left:849px;top:102px" width="24" height="24" viewBox="0 0 24 24"><path d="M1 7.5 L5 3.5 H18 V11.5 H5 Z" fill="#eceae4" stroke="#d8d4cc" stroke-width="0.9"/><text x="4.5" y="10.5" font-family="Liberation Sans" font-weight="700" font-size="7.5" fill="#c8c4bc">abc</text><path d="M8 18 C11 14 17 14 21 18 C17 22 11 22 8 18 Z" fill="none" stroke="#d0d0d0" stroke-width="1"/><circle cx="14.5" cy="18" r="2" fill="#ddd"/></svg>
<svg style="position:absolute;left:882px;top:102px" width="24" height="24" viewBox="0 0 24 24"><path d="M1 7.5 L5 3.5 H18 V11.5 H5 Z" fill="#eceae4" stroke="#d8d4cc" stroke-width="0.9"/><text x="4.5" y="10.5" font-family="Liberation Sans" font-weight="700" font-size="7.5" fill="#c8c4bc">abc</text><rect x="13" y="13" width="10" height="10" rx="1.5" fill="#d8d8d8"/><path d="M15 16.5 H18 V14.5 L21.5 18 L18 21.5 V19.5 H15 Z" fill="#fff"/></svg>
<svg style="position:absolute;left:915px;top:102px" width="24" height="24" viewBox="0 0 24 24"><path d="M1 7.5 L5 3.5 H18 V11.5 H5 Z" fill="#eceae4" stroke="#d8d4cc" stroke-width="0.9"/><text x="4.5" y="10.5" font-family="Liberation Sans" font-weight="700" font-size="7.5" fill="#c8c4bc">abc</text><rect x="13" y="13" width="10" height="10" rx="1.5" fill="#d8d8d8"/><circle cx="18" cy="18" r="2.8" fill="none" stroke="#fff" stroke-width="1.3"/></svg>
<svg style="position:absolute;left:948px;top:102px" width="24" height="24" viewBox="0 0 24 24"><path d="M1 7.5 L5 3.5 H18 V11.5 H5 Z" fill="#eceae4" stroke="#d8d4cc" stroke-width="0.9"/><text x="4.5" y="10.5" font-family="Liberation Sans" font-weight="700" font-size="7.5" fill="#c8c4bc">abc</text><rect x="13" y="13" width="10" height="10" rx="1.5" fill="#d8d8d8"/><path d="M15 21 L20 15" stroke="#fff" stroke-width="1.6"/></svg>
<svg style="position:absolute;left:1014px;top:102px" width="24" height="24" viewBox="0 0 24 24"><path d="M11.5 1.5 C7 1.5 6.5 3 6.5 5 V7.5 H12 V8.5 H4.5 C2 8.5 1 10.5 1 13 C1 16 2 17.5 4.5 17.5 H6.5 V14.5 C6.5 12.5 8 11 10 11 H14.5 C16 11 17 10 17 8.5 V5 C17 3 15.5 1.5 11.5 1.5 Z" fill="#3a75b0"/><circle cx="9" cy="4.3" r="0.9" fill="#fff"/><path d="M12 22 C16.5 22 17 20.5 17 18.5 V16 H11.5 V15 H19 C21.5 15 22.5 13 22.5 10.5 C22.5 7.5 21.5 6 19 6 H17 V9 C17 11 15.5 12.5 13.5 12.5 H9 C7.5 12.5 6.5 13.5 6.5 15 V18.5 C6.5 20.5 8 22 12 22 Z" fill="#f7d23e"/><path d="M16 18 L20 20 L16 22" fill="none" stroke="#333" stroke-width="1.1"/></svg>
<svg style="position:absolute;left:1063px;top:102px" width="24" height="24" viewBox="0 0 24 24"><rect x="2" y="1.5" width="20" height="21" fill="#6f98c9" stroke="#223344" stroke-width="1"/><rect x="2" y="1.5" width="5" height="21" fill="#223344"/><text x="10.5" y="16.5" font-family="Liberation Sans" font-size="13" fill="#fff">?</text></svg>
<div style="position:absolute;left:182px;top:105px;width:1px;height:18px;background:#d0d0d0"></div>
<svg style="position:absolute;left:234px;top:106px" width="4" height="16" viewBox="0 0 4 16"><rect x="0" y="0" width="1" height="1" fill="#bdbdbd"/><rect x="3" y="0" width="1" height="1" fill="#bdbdbd"/><rect x="0" y="3" width="1" height="1" fill="#bdbdbd"/><rect x="3" y="3" width="1" height="1" fill="#bdbdbd"/><rect x="0" y="6" width="1" height="1" fill="#bdbdbd"/><rect x="3" y="6" width="1" height="1" fill="#bdbdbd"/><rect x="0" y="9" width="1" height="1" fill="#bdbdbd"/><rect x="3" y="9" width="1" height="1" fill="#bdbdbd"/><rect x="0" y="12" width="1" height="1" fill="#bdbdbd"/><rect x="3" y="12" width="1" height="1" fill="#bdbdbd"/><rect x="0" y="15" width="1" height="1" fill="#bdbdbd"/><rect x="3" y="15" width="1" height="1" fill="#bdbdbd"/></svg>
<svg style="position:absolute;left:406px;top:113px" width="8" height="5" viewBox="0 0 8 5"><path d="M0 0 H8 L4 4 Z" fill="#cfcfcf"/></svg>
<svg style="position:absolute;left:265px;top:122px" width="8" height="5" viewBox="0 0 8 5"><path d="M0 0 H8 L4 4 Z" fill="#cfcfcf"/></svg>
<svg style="position:absolute;left:659px;top:106px" width="4" height="16" viewBox="0 0 4 16"><rect x="0" y="0" width="1" height="1" fill="#bdbdbd"/><rect x="3" y="0" width="1" height="1" fill="#bdbdbd"/><rect x="0" y="3" width="1" height="1" fill="#bdbdbd"/><rect x="3" y="3" width="1" height="1" fill="#bdbdbd"/><rect x="0" y="6" width="1" height="1" fill="#bdbdbd"/><rect x="3" y="6" width="1" height="1" fill="#bdbdbd"/><rect x="0" y="9" width="1" height="1" fill="#bdbdbd"/><rect x="3" y="9" width="1" height="1" fill="#bdbdbd"/><rect x="0" y="12" width="1" height="1" fill="#bdbdbd"/><rect x="3" y="12" width="1" height="1" fill="#bdbdbd"/><rect x="0" y="15" width="1" height="1" fill="#bdbdbd"/><rect x="3" y="15" width="1" height="1" fill="#bdbdbd"/></svg>
<div style="position:absolute;left:735px;top:105px;width:1px;height:18px;background:#d0d0d0"></div>
<div style="position:absolute;left:808px;top:105px;width:1px;height:18px;background:#d0d0d0"></div>
<svg style="position:absolute;left:986px;top:106px" width="4" height="16" viewBox="0 0 4 16"><rect x="0" y="0" width="1" height="1" fill="#bdbdbd"/><rect x="3" y="0" width="1" height="1" fill="#bdbdbd"/><rect x="0" y="3" width="1" height="1" fill="#bdbdbd"/><rect x="3" y="3" width="1" height="1" fill="#bdbdbd"/><rect x="0" y="6" width="1" height="1" fill="#bdbdbd"/><rect x="3" y="6" width="1" height="1" fill="#bdbdbd"/><rect x="0" y="9" width="1" height="1" fill="#bdbdbd"/><rect x="3" y="9" width="1" height="1" fill="#bdbdbd"/><rect x="0" y="12" width="1" height="1" fill="#bdbdbd"/><rect x="3" y="12" width="1" height="1" fill="#bdbdbd"/><rect x="0" y="15" width="1" height="1" fill="#bdbdbd"/><rect x="3" y="15" width="1" height="1" fill="#bdbdbd"/></svg>
<svg style="position:absolute;left:1003px;top:106px" width="4" height="16" viewBox="0 0 4 16"><rect x="0" y="0" width="1" height="1" fill="#bdbdbd"/><rect x="3" y="0" width="1" height="1" fill="#bdbdbd"/><rect x="0" y="3" width="1" height="1" fill="#bdbdbd"/><rect x="3" y="3" width="1" height="1" fill="#bdbdbd"/><rect x="0" y="6" width="1" height="1" fill="#bdbdbd"/><rect x="3" y="6" width="1" height="1" fill="#bdbdbd"/><rect x="0" y="9" width="1" height="1" fill="#bdbdbd"/><rect x="3" y="9" width="1" height="1" fill="#bdbdbd"/><rect x="0" y="12" width="1" height="1" fill="#bdbdbd"/><rect x="3" y="12" width="1" height="1" fill="#bdbdbd"/><rect x="0" y="15" width="1" height="1" fill="#bdbdbd"/><rect x="3" y="15" width="1" height="1" fill="#bdbdbd"/></svg>
<svg style="position:absolute;left:1052px;top:106px" width="4" height="16" viewBox="0 0 4 16"><rect x="0" y="0" width="1" height="1" fill="#bdbdbd"/><rect x="3" y="0" width="1" height="1" fill="#bdbdbd"/><rect x="0" y="3" width="1" height="1" fill="#bdbdbd"/><rect x="3" y="3" width="1" height="1" fill="#bdbdbd"/><rect x="0" y="6" width="1" height="1" fill="#bdbdbd"/><rect x="3" y="6" width="1" height="1" fill="#bdbdbd"/><rect x="0" y="9" width="1" height="1" fill="#bdbdbd"/><rect x="3" y="9" width="1" height="1" fill="#bdbdbd"/><rect x="0" y="12" width="1" height="1" fill="#bdbdbd"/><rect x="3" y="12" width="1" height="1" fill="#bdbdbd"/><rect x="0" y="15" width="1" height="1" fill="#bdbdbd"/><rect x="3" y="15" width="1" height="1" fill="#bdbdbd"/></svg>
<svg style="position:absolute;left:1101px;top:106px" width="4" height="16" viewBox="0 0 4 16"><rect x="0" y="0" width="1" height="1" fill="#bdbdbd"/><rect x="3" y="0" width="1" height="1" fill="#bdbdbd"/><rect x="0" y="3" width="1" height="1" fill="#bdbdbd"/><rect x="3" y="3" width="1" height="1" fill="#bdbdbd"/><rect x="0" y="6" width="1" height="1" fill="#bdbdbd"/><rect x="3" y="6" width="1" height="1" fill="#bdbdbd"/><rect x="0" y="9" width="1" height="1" fill="#bdbdbd"/><rect x="3" y="9" width="1" height="1" fill="#bdbdbd"/><rect x="0" y="12" width="1" height="1" fill="#bdbdbd"/><rect x="3" y="12" width="1" height="1" fill="#bdbdbd"/><rect x="0" y="15" width="1" height="1" fill="#bdbdbd"/><rect x="3" y="15" width="1" height="1" fill="#bdbdbd"/></svg>
<svg style="position:absolute;left:6px;top:145px" width="4" height="16" viewBox="0 0 4 16"><rect x="0" y="0" width="1" height="1" fill="#bdbdbd"/><rect x="3" y="0" width="1" height="1" fill="#bdbdbd"/><rect x="0" y="3" width="1" height="1" fill="#bdbdbd"/><rect x="3" y="3" width="1" height="1" fill="#bdbdbd"/><rect x="0" y="6" width="1" height="1" fill="#bdbdbd"/><rect x="3" y="6" width="1" height="1" fill="#bdbdbd"/><rect x="0" y="9" width="1" height="1" fill="#bdbdbd"/><rect x="3" y="9" width="1" height="1" fill="#bdbdbd"/><rect x="0" y="12" width="1" height="1" fill="#bdbdbd"/><rect x="3" y="12" width="1" height="1" fill="#bdbdbd"/><rect x="0" y="15" width="1" height="1" fill="#bdbdbd"/><rect x="3" y="15" width="1" height="1" fill="#bdbdbd"/></svg>
<svg style="position:absolute;left:17px;top:141px" width="24" height="24" viewBox="0 0 24 24"><path d="M2 2 L22 22 H2 Z" fill="#e4e0da" stroke="#c9c4bc" stroke-width="1"/><path d="M5 12 L12 19 H5 Z" fill="#f8f8f8" stroke="#c9c4bc" stroke-width="0.9"/><path d="M14 2 H22 V22 L14 14 Z" fill="#eeeae4" stroke="#c9c4bc" stroke-width="0.9"/></svg>
<svg style="position:absolute;left:52px;top:141px" width="24" height="24" viewBox="0 0 24 24"><g fill="#dcdcd8"><circle cx="10" cy="3" r="2.2"/><circle cx="19" cy="5" r="2.2"/><circle cx="3" cy="11" r="2.2"/></g><rect x="12" y="12" width="11" height="11" rx="2" fill="#cbcbcb"/><path d="M14 16.5 H17.5 V14 L21.5 17.5 L17.5 21 V18.5 H14 Z" fill="#fff"/></svg>
<svg style="position:absolute;left:96px;top:141px" width="24" height="24" viewBox="0 0 24 24"><path d="M2 8 C1 3 5 1.5 10 2 C14 2.5 15 4 18 3.5 C21 3 23 5 22.5 8 C22 11 19 12 16 10.5 C13 9.5 12 12 8 11.5 C4 11.5 2.5 10.5 2 8 Z" fill="#e2e2e0" stroke="#c6c6c4" stroke-width="0.9"/><rect x="13" y="13" width="10.5" height="10.5" rx="1.5" fill="#cacaca"/><path d="M20.5 18.5 A2.6 2.6 0 1 1 18.2 15.9" fill="none" stroke="#fff" stroke-width="1.5"/><path d="M17 14.5 L19.5 16 L17 17.5 Z" fill="#fff"/></svg>
<svg style="position:absolute;left:129px;top:141px" width="24" height="24" viewBox="0 0 24 24"><circle cx="8.5" cy="8" r="7" fill="#e2e2e0" stroke="#c6c6c4" stroke-width="0.9"/><path d="M13 11 L20 11 L23.5 17 L20 23 H13 L9.5 17 Z" fill="#e8e9ec" stroke="#c8c8cc" stroke-width="0.9"/><path d="M8 8 L16 17 M16 17 V13.5 M16 17 H12.5" stroke="#aaa" stroke-width="0.8" fill="none"/></svg>
<svg style="position:absolute;left:162px;top:141px" width="24" height="24" viewBox="0 0 24 24"><path d="M2 8 C1 3 5 1.5 10 2 C14 2.5 15 4 18 3.5 C21 3 23 5 22.5 8 C22 11 19 12 16 10.5 C13 9.5 12 12 8 11.5 C4 11.5 2.5 10.5 2 8 Z" fill="#e2e2e0" stroke="#c6c6c4" stroke-width="0.9"/><ellipse cx="8" cy="6" rx="4" ry="2.6" fill="#f8f8f8" stroke="#c6c6c4" stroke-width="0.9"/><rect x="13" y="13" width="10.5" height="10.5" rx="1.5" fill="#cdc7b6"/><path d="M18.25 14.8 V22.2 M14.6 18.5 H21.9 M15.7 15.9 L20.8 21.1 M20.8 15.9 L15.7 21.1" stroke="#fff" stroke-width="1"/><circle cx="18.25" cy="18.5" r="1.6" fill="#cdc7b6" stroke="#fff" stroke-width="0.8"/></svg>
<svg style="position:absolute;left:195px;top:141px" width="24" height="24" viewBox="0 0 24 24"><path d="M2 8 C1 3 5 1.5 10 2 C14 2.5 15 4 18 3.5 C21 3 23 5 22.5 8 C22 11 19 12 16 10.5 C13 9.5 12 12 8 11.5 C4 11.5 2.5 10.5 2 8 Z" fill="#e2e2e0" stroke="#c6c6c4" stroke-width="0.9"/><path d="M2 21 C1 18 4 14 8 13 C10 13 10.5 15 10 17 C9 20 6 23 3 22.5 Z" fill="#e2e2e0" stroke="#c6c6c4" stroke-width="0.9"/><rect x="13" y="13" width="10.5" height="10.5" rx="1.5" fill="#cdc7b6"/><path d="M18.25 14.8 V22.2 M14.6 18.5 H21.9 M15.7 15.9 L20.8 21.1 M20.8 15.9 L15.7 21.1" stroke="#fff" stroke-width="1"/><circle cx="18.25" cy="18.5" r="1.6" fill="#cdc7b6" stroke="#fff" stroke-width="0.8"/></svg>
<svg style="position:absolute;left:228px;top:141px" width="24" height="24" viewBox="0 0 24 24"><path d="M2 8 C1 3 5 1.5 10 2 C14 2.5 15 4 18 3.5 C21 3 23 5 22.5 8 C22 11 19 12 16 10.5 C13 9.5 12 12 8 11.5 C4 11.5 2.5 10.5 2 8 Z" fill="#e2e2e0" stroke="#c6c6c4" stroke-width="0.9"/><ellipse cx="8" cy="6" rx="4" ry="2.6" fill="#f8f8f8" stroke="#c6c6c4" stroke-width="0.9"/><rect x="13" y="13" width="10.5" height="10.5" rx="1.5" fill="#cdc7b6"/><path d="M18.25 14.8 V22.2 M14.6 18.5 H21.9 M15.7 15.9 L20.8 21.1 M20.8 15.9 L15.7 21.1" stroke="#fff" stroke-width="1"/><circle cx="18.25" cy="18.5" r="1.6" fill="#cdc7b6" stroke="#fff" stroke-width="0.8"/></svg>
<svg style="position:absolute;left:261px;top:141px" width="24" height="24" viewBox="0 0 24 24"><path d="M2 8 C1 3 5 1.5 10 2 C14 2.5 15 4 18 3.5 C21 3 23 5 22.5 8 C22 11 19 12 16 10.5 C13 9.5 12 12 8 11.5 C4 11.5 2.5 10.5 2 8 Z" fill="#e2e2e0" stroke="#c6c6c4" stroke-width="0.9"/><ellipse cx="8" cy="6" rx="4" ry="2.6" fill="#f8f8f8" stroke="#c6c6c4" stroke-width="0.9"/><rect x="13" y="13" width="10.5" height="10.5" rx="1.5" fill="#e6dcdc"/><path d="M15.5 15.8 L21 21.2 M21 15.8 L15.5 21.2" stroke="#fff" stroke-width="1.8"/></svg>
<svg style="position:absolute;left:294px;top:141px" width="24" height="24" viewBox="0 0 24 24"><path d="M2 8 C1 3 5 1.5 10 2 C14 2.5 15 4 18 3.5 C21 3 23 5 22.5 8 C22 11 19 12 16 10.5 C13 9.5 12 12 8 11.5 C4 11.5 2.5 10.5 2 8 Z" fill="#e2e2e0" stroke="#c6c6c4" stroke-width="0.9"/><path d="M2 21 C1 18 4 14 8 13 C10 13 10.5 15 10 17 C9 20 6 23 3 22.5 Z" fill="#e2e2e0" stroke="#c6c6c4" stroke-width="0.9"/><rect x="13" y="13" width="10.5" height="10.5" rx="1.5" fill="#e6dcdc"/><path d="M15.5 15.8 L21 21.2 M21 15.8 L15.5 21.2" stroke="#fff" stroke-width="1.8"/></svg>
<svg style="position:absolute;left:327px;top:141px" width="24" height="24" viewBox="0 0 24 24"><path d="M2 5 C2 1 8 1 12 2 C16 1 22 2 22 6 C22 10 17 10 13 11 C10 12 9 20 5 21 C2 21 2 14 2 5 Z" fill="#dcdcd8" stroke="#cfcfcb" stroke-width="0.6"/></svg>
<svg style="position:absolute;left:360px;top:141px" width="24" height="24" viewBox="0 0 24 24"><path d="M3 18 C1 14 8 4 14 2 C20 0 24 4 21 9 C18 14 10 22 6 22 C4 22 3 20 3 18 Z" fill="#dcdcd8" stroke="#cfcfcb" stroke-width="0.8"/><path d="M6 18 C5 15 10 7 15 5 C19 4 21 6 19 9 C16 13 10 19 8 19 Z" fill="#e6e6e2" stroke="#d2d2ce" stroke-width="0.7"/></svg>
<svg style="position:absolute;left:393px;top:141px" width="24" height="24" viewBox="0 0 24 24"><path d="M2 2 L8 14 L13 4 H21" fill="none" stroke="#d0d0d0" stroke-width="1"/><g fill="#fff" stroke="#d0d0d0" stroke-width="0.8"><rect x="0.5" y="0.5" width="3" height="3"/><rect x="12" y="2.5" width="3" height="3"/><rect x="19.5" y="2.5" width="3" height="3"/><rect x="6.5" y="12.5" width="3" height="3"/></g><rect x="13" y="13" width="10" height="10" rx="1.5" fill="#cfcfcf"/><circle cx="18" cy="18" r="2.6" fill="none" stroke="#fff" stroke-width="1.2"/></svg>
<svg style="position:absolute;left:426px;top:141px" width="24" height="24" viewBox="0 0 24 24"><path d="M9 1 V23 M1 11 H22" stroke="#d6d6d6" stroke-width="1"/><g fill="#fff" stroke="#d0d0d0" stroke-width="0.9"><circle cx="9" cy="11" r="2"/><rect x="13" y="9" width="4" height="4"/></g><rect x="16" y="2" width="6" height="6" rx="1" fill="#ded8c8"/><rect x="1" y="16" width="6" height="6" rx="1" fill="#e8dada"/></svg>
<svg style="position:absolute;left:459px;top:141px" width="24" height="24" viewBox="0 0 24 24"><circle cx="7" cy="7" r="6" fill="#dcdcd8"/><circle cx="16" cy="7" r="6" fill="#dcdcd8"/><path d="M8 10 L14 22 M15 10 L9 22" stroke="#d4c4c4" stroke-width="1"/><circle cx="9" cy="21" r="2" fill="none" stroke="#d4c4c4" stroke-width="1"/><circle cx="15" cy="21" r="2" fill="none" stroke="#d4c4c4" stroke-width="1"/></svg>
<svg style="position:absolute;left:492px;top:141px" width="24" height="24" viewBox="0 0 24 24"><circle cx="7" cy="7" r="6" fill="#dcdcd8"/><circle cx="16" cy="8" r="5.5" fill="#dcdcd8"/><path d="M8 10 L14 22 M15 10 L9 22" stroke="#d4c4c4" stroke-width="1"/><circle cx="9" cy="21" r="2" fill="none" stroke="#d4c4c4" stroke-width="1"/><circle cx="15" cy="21" r="2" fill="none" stroke="#d4c4c4" stroke-width="1"/></svg>
<svg style="position:absolute;left:525px;top:141px" width="24" height="24" viewBox="0 0 24 24"><circle cx="7" cy="7" r="6" fill="#dcdcd8"/><circle cx="17" cy="7" r="6" fill="#dcdcd8"/><path d="M10 6 H15 M10 9 H15" stroke="#e8e8e8" stroke-width="1"/><path d="M6 12 C7 16 9 19 12 21" fill="none" stroke="#c8c8c8" stroke-width="1"/></svg>
<svg style="position:absolute;left:558px;top:141px" width="24" height="24" viewBox="0 0 24 24"><g stroke="#d6d6d6" stroke-width="1" fill="none"><path d="M1 3 H23 M1 10 H23 M1 17 H23 M1 22 H23 M4 1 V23"/><path d="M8 6 C10 3 12 3 14 6 M8 13 C10 10 12 10 14 13 M8 20 C10 17 12 17 14 20"/></g></svg>
<svg style="position:absolute;left:591px;top:141px" width="24" height="24" viewBox="0 0 24 24"><path d="M8 4 C3 6 2 13 6 17" fill="none" stroke="#d0d0d0" stroke-width="1"/><path d="M13 1 V11 L22 6 Z" fill="#d8d8d8" stroke="#c8c8c8" stroke-width="0.6"/><path d="M13 11 L8 21 H18 Z" fill="none" stroke="#d8d8d8" stroke-width="1"/></svg>
<svg style="position:absolute;left:81px;top:149px" width="8" height="5" viewBox="0 0 8 5"><path d="M0 0 H8 L4 4 Z" fill="#d0d0d0"/></svg>
<svg style="position:absolute;left:620px;top:149px" width="8" height="5" viewBox="0 0 8 5"><path d="M0 0 H8 L4 4 Z" fill="#d0d0d0"/></svg>
<svg style="position:absolute;left:6px;top:184px" width="4" height="16" viewBox="0 0 4 16"><rect x="0" y="0" width="1" height="1" fill="#bdbdbd"/><rect x="3" y="0" width="1" height="1" fill="#bdbdbd"/><rect x="0" y="3" width="1" height="1" fill="#bdbdbd"/><rect x="3" y="3" width="1" height="1" fill="#bdbdbd"/><rect x="0" y="6" width="1" height="1" fill="#bdbdbd"/><rect x="3" y="6" width="1" height="1" fill="#bdbdbd"/><rect x="0" y="9" width="1" height="1" fill="#bdbdbd"/><rect x="3" y="9" width="1" height="1" fill="#bdbdbd"/><rect x="0" y="12" width="1" height="1" fill="#bdbdbd"/><rect x="3" y="12" width="1" height="1" fill="#bdbdbd"/><rect x="0" y="15" width="1" height="1" fill="#bdbdbd"/><rect x="3" y="15" width="1" height="1" fill="#bdbdbd"/></svg>
<svg style="position:absolute;left:18px;top:180px" width="24" height="24" viewBox="0 0 24 24"><rect x="1.5" y="1" width="21" height="19.5" fill="#e4e4e4" stroke="#222" stroke-width="1" stroke-dasharray="2 1.2"/><rect x="3" y="3" width="12" height="12" fill="#fcd84e" stroke="#b69a1f" stroke-width="0.8"/><path d="M11 9 V23 L14.5 19.5 L17 24 L19.5 23 L17 18.5 H22 Z" fill="#fff" stroke="#333" stroke-width="0.9" stroke-linejoin="round"/></svg>
<svg style="position:absolute;left:47px;top:191px" width="8" height="5" viewBox="0 0 8 5"><path d="M0 0 H8 L4 4 Z" fill="#444"/></svg>
<svg style="position:absolute;left:63px;top:180px" width="24" height="24" viewBox="0 0 24 24"><rect x="7" y="10" width="15" height="12" fill="#fcd84e" stroke="#b69a1f" stroke-width="0.9"/><rect x="2" y="2" width="15" height="14" fill="#d6dde6" stroke="#777" stroke-width="0.9"/><rect x="4" y="4.5" width="11" height="3.5" fill="#fff" stroke="#777" stroke-width="0.6"/><rect x="4" y="9.5" width="11" height="3.5" fill="#fff" stroke="#777" stroke-width="0.6"/></svg>
<svg style="position:absolute;left:93px;top:191px" width="8" height="5" viewBox="0 0 8 5"><path d="M0 0 H8 L4 4 Z" fill="#444"/></svg>
<svg style="position:absolute;left:108px;top:180px" width="24" height="24" viewBox="0 0 24 24"><rect x="1.5" y="1.5" width="12" height="12" fill="#fcd84e" stroke="#b69a1f" stroke-width="0.9"/><rect x="5.5" y="5.5" width="12" height="12" fill="#fcd84e" stroke="#b69a1f" stroke-width="0.9"/><rect x="12" y="12" width="11" height="11" rx="2" fill="#d6161b"/><circle cx="17.5" cy="17.5" r="3.2" fill="none" stroke="#fff" stroke-width="1.2"/><path d="M15.3 19.7 L19.7 15.3" stroke="#fff" stroke-width="1.2"/></svg>
<svg style="position:absolute;left:138px;top:191px" width="8" height="5" viewBox="0 0 8 5"><path d="M0 0 H8 L4 4 Z" fill="#444"/></svg>
<div style="position:absolute;left:0px;top:56px;width:1px;height:1144px;background:#e3e3e3"></div>
<div class="t" style="left:5px;top:215.30px;font-size:15px;line-height:15px;color:#111;font-weight:400;">Browser</div>
<svg style="position:absolute;left:424px;top:217px" width="11" height="11" viewBox="0 0 11 11"><rect x="0.5" y="0.5" width="10" height="10" rx="2.5" fill="none" stroke="#666" stroke-width="1"/><rect x="4.5" y="2.5" width="4" height="4" rx="1" fill="none" stroke="#666" stroke-width="1"/><rect x="2.5" y="4.5" width="4" height="4" rx="1" fill="#efefef" stroke="#666" stroke-width="1"/></svg>
<svg style="position:absolute;left:438px;top:217px" width="11" height="11" viewBox="0 0 11 11"><rect x="0.5" y="0.5" width="10" height="10" rx="2.5" fill="none" stroke="#666" stroke-width="1"/><path d="M3 3 L8 8 M8 3 L3 8" stroke="#555" stroke-width="2"/></svg>
<svg style="position:absolute;left:9px;top:240px" width="16" height="16" viewBox="0 0 16 16"><rect x="1.5" y="1.5" width="11" height="11" fill="#f2f2f2" stroke="#777" stroke-width="1"/><rect x="9.5" y="9.5" width="6" height="6" rx="1.8" fill="#cfe3cf" stroke="#4a8f52" stroke-width="1.4"/></svg>
<svg style="position:absolute;left:34px;top:240px" width="16" height="16" viewBox="0 0 16 16"><path d="M1.5 7 C1.5 3 6 0.5 10 2 L12 3 L14 1 V7 H8.5 L10.5 5 C8 3.5 4.5 4.5 4 7 Z" fill="#4f8fd4"/><path d="M14.5 9 C14.5 13 10 15.5 6 14 L4 13 L2 15 V9 H7.5 L5.5 11 C8 12.5 11.5 11.5 12 9 Z" fill="#4f8fd4"/></svg>
<svg style="position:absolute;left:59px;top:240px" width="16" height="16" viewBox="0 0 16 16"><path d="M1 1.5 H15 V3 L10 9 V15.5 L6.5 13 V9 L1 3 Z" fill="#6f98c9" stroke="#3d6a9f" stroke-width="0.6"/><rect x="1.5" y="1.5" width="13" height="1.8" fill="#f5d84a"/></svg>
<svg style="position:absolute;left:84px;top:240px" width="16" height="16" viewBox="0 0 16 16"><path d="M1 2 H6 M2 2 V13 H5 M2 8 H5" stroke="#bbb" stroke-width="0.8" fill="none"/><rect x="3.5" y="5" width="3" height="3" fill="#f7941d"/><rect x="3.5" y="11" width="3" height="3" fill="#f7941d"/><path d="M11 1 L15 5.5 H12.5 V13 H9.5 V5.5 H7 Z" fill="#5b8dc9" stroke="#33638f" stroke-width="0.6"/></svg>
<svg style="position:absolute;left:109px;top:240px" width="16" height="16" viewBox="0 0 16 16"><circle cx="8" cy="8" r="7" fill="#5b8dc9" stroke="#4a7ab2" stroke-width="0.6"/><text x="6" y="12.5" font-family="Liberation Serif" font-style="italic" font-weight="700" font-size="11" fill="#fff">i</text></svg>
<div style="position:absolute;left:1px;top:264px;width:450px;height:471px;background:#fff;border:1px solid #b0b0b0;box-sizing:border-box"></div>
<div style="position:absolute;left:436px;top:265px;width:14px;height:469px;background:linear-gradient(90deg,#fbfbfb,#ececec);border-left:1px solid #b9b9b9;box-sizing:border-box"></div>
<div style="position:absolute;left:436px;top:265px;width:14px;height:14px;background:#fff;border-left:1px solid #b9b9b9;border-bottom:1px solid #c4c4c4;box-sizing:border-box"></div>
<svg style="position:absolute;left:439px;top:269px" width="9" height="5" viewBox="0 0 9 5"><path d="M0 5 L4.5 0 L9 5 Z" fill="#555"/></svg>
<div style="position:absolute;left:436px;top:613px;width:14px;height:107px;background:#dcdcdc;border-left:1px solid #b9b9b9;border-top:1px solid #c4c4c4;box-sizing:border-box"></div>
<div style="position:absolute;left:436px;top:720px;width:14px;height:14px;background:#fff;border-left:1px solid #b9b9b9;border-top:1px solid #c4c4c4;box-sizing:border-box"></div>
<svg style="position:absolute;left:439px;top:725px" width="9" height="5" viewBox="0 0 9 5"><path d="M0 0 L4.5 5 L9 0 Z" fill="#555"/></svg>
<div style="position:absolute;left:44px;top:265px;width:215px;height:21px;background:linear-gradient(#eaf6fe,#e5ebf2);border:1px solid #a9c5d9;border-radius:2px;box-sizing:border-box"></div>
<svg style="position:absolute;left:25px;top:267px" width="16" height="16" viewBox="0 0 16 16"><path d="M8 0.5 L10.2 5.6 L15.5 5.9 L11.4 9.4 L12.7 14.8 L8 11.8 L3.3 14.8 L4.6 9.4 L0.5 5.9 L5.8 5.6 Z" fill="#fbe54a" stroke="#d9b51c" stroke-width="0.9" stroke-linejoin="round"/></svg>
<div class="t" style="left:47px;top:268.30px;font-size:15px;line-height:15px;color:#111;font-weight:400;transform:scaleX(0.9951);transform-origin:0 0;">Favorites</div>
<svg style="position:absolute;left:25px;top:288px" width="16" height="16" viewBox="0 0 16 16"><path d="M3 1.5 H14.5 V14.5 H3 C2 14.5 1.5 14 1.5 13 V3 C1.5 2 2 1.5 3 1.5 Z" fill="#e8e8e8" stroke="#aaa" stroke-width="0.8"/><path d="M3.5 2 V14" stroke="#c8c8c8" stroke-width="0.8"/><path d="M8.5 1 H11 V6.5 L9.75 5.3 L8.5 6.5 Z" fill="#5b8dc9"/></svg>
<div class="t" style="left:47px;top:289.30px;font-size:15px;line-height:15px;color:#111;font-weight:400;transform:scaleX(0.9856);transform-origin:0 0;">Spatial Bookmarks</div>
<svg style="position:absolute;left:9px;top:292px" width="5" height="9" viewBox="0 0 5 9"><path d="M0 0 L5 4.5 L0 9 Z" fill="#444"/></svg>
<svg style="position:absolute;left:25px;top:309px" width="16" height="16" viewBox="0 0 16 16"><path d="M1.5 2 H7 L8 3.5 H14.5 V14.5 H1.5 Z" fill="#f8f8f8" stroke="#777" stroke-width="0.9"/><path d="M4.5 12 V8.5 L8 5.5 L11.5 8.5 V12 Z" fill="none" stroke="#333" stroke-width="1"/></svg>
<div class="t" style="left:47px;top:310.30px;font-size:15px;line-height:15px;color:#111;font-weight:400;transform:scaleX(0.9925);transform-origin:0 0;">Home</div>
<svg style="position:absolute;left:9px;top:313px" width="5" height="9" viewBox="0 0 5 9"><path d="M0 0 L5 4.5 L0 9 Z" fill="#444"/></svg>
<svg style="position:absolute;left:25px;top:330px" width="16" height="16" viewBox="0 0 16 16"><path d="M1.5 1.5 H7 L8.5 3 H14.5 V14.5 H1.5 Z" fill="#f2f2f2" stroke="#888" stroke-width="0.9"/></svg>
<div class="t" style="left:47px;top:331.30px;font-size:15px;line-height:15px;color:#111;font-weight:400;">/</div>
<svg style="position:absolute;left:9px;top:334px" width="5" height="9" viewBox="0 0 5 9"><path d="M0 0 L5 4.5 L0 9 Z" fill="#444"/></svg>
<svg style="position:absolute;left:25px;top:351px" width="16" height="16" viewBox="0 0 16 16"><path d="M0.8 7.5 L8 10.5 V15.5 L0.8 12.5 Z" fill="#d9b21c" stroke="#444" stroke-width="0.7"/><path d="M8 10.5 L15.2 7.5 V12.5 L8 15.5 Z" fill="#fdf07a" stroke="#444" stroke-width="0.7"/><circle cx="8" cy="6.3" r="5.6" fill="#8fb2dd" stroke="#3a6aa0" stroke-width="0.6"/><path d="M4.5 4.5 C6 3.5 7.3 6 9 5.2 C10 4.7 10.8 3.8 12 4.6 M5 8 C7 7.2 8 9.5 11 8.6" stroke="#2a5590" stroke-width="1.5" fill="none"/><path d="M0.8 7.5 L3 6.6 M15.2 7.5 L13 6.6" stroke="#444" stroke-width="0.7"/></svg>
<div class="t" style="left:47px;top:352.30px;font-size:15px;line-height:15px;color:#111;font-weight:400;transform:scaleX(0.9500);transform-origin:0 0;">GeoPackage</div>
<svg style="position:absolute;left:25px;top:372px" width="16" height="16" viewBox="0 0 16 16"><path d="M1 15.5 C3 10 8 4 15 0.5 C14 6 10 11 4 13.5 Z" fill="#8fb2dd" stroke="#4574aa" stroke-width="0.8"/></svg>
<div class="t" style="left:47px;top:373.30px;font-size:15px;line-height:15px;color:#111;font-weight:400;transform:scaleX(0.9909);transform-origin:0 0;">SpatiaLite</div>
<svg style="position:absolute;left:25px;top:393px" width="16" height="16" viewBox="0 0 16 16"><path d="M4 1 C1 1 0.5 4 0.8 7 C1.2 10 2.5 12 4 11.5 C5 11 4.5 9 5.5 9 C6.5 9.5 6.5 14.5 8.5 15.3 C10.5 15.5 10.5 12 11 10 C12.5 10.5 14 11 15 10 C13.5 9.5 13.5 8 14.2 7 C15.5 5 15.5 1.5 12 1 C10 0.6 6 0.6 4 1 Z" fill="#6f98c9" stroke="#33638f" stroke-width="0.8"/><path d="M5 4 C6 6 8 6 9 5" fill="none" stroke="#33638f" stroke-width="0.7"/></svg>
<div class="t" style="left:47px;top:394.30px;font-size:15px;line-height:15px;color:#111;font-weight:400;transform:scaleX(0.9509);transform-origin:0 0;">PostGIS</div>
<svg style="position:absolute;left:25px;top:414px" width="16" height="16" viewBox="0 0 16 16"><path d="M1 1 C6 2 12 4 15.5 8 C12 11 6 13 1 15 C3 11 3 5 1 1 Z" fill="#5b8dc9" stroke="#33638f" stroke-width="0.6"/><path d="M3 3 C6 6 6 10 3 13 M6 4 C8 6 8 10 6 12" fill="none" stroke="#dce8f5" stroke-width="0.8"/></svg>
<div class="t" style="left:47px;top:415.30px;font-size:15px;line-height:15px;color:#111;font-weight:400;transform:scaleX(0.9231);transform-origin:0 0;">MSSQL</div>
<svg style="position:absolute;left:25px;top:435px" width="16" height="16" viewBox="0 0 16 16"><rect x="0.5" y="0.5" width="15" height="15" rx="2.5" fill="#5b8dc9" stroke="#4a7ab2" stroke-width="0.6"/><text x="1.6" y="10.8" font-family="Liberation Sans" font-weight="700" font-size="6.2" fill="#dfe9f5">DB2</text></svg>
<div class="t" style="left:47px;top:436.30px;font-size:15px;line-height:15px;color:#111;font-weight:400;transform:scaleX(0.9929);transform-origin:0 0;">DB2</div>
<svg style="position:absolute;left:25px;top:456px" width="16" height="16" viewBox="0 0 16 16"><circle cx="8" cy="8" r="7.3" fill="#9bbbe2" stroke="#4574aa" stroke-width="0.8"/><path d="M3.5 4.5 C5 3.5 6.5 6 8 5.5 C9 5 10 3.5 12 4.5 M3 9 C5 8.5 6 11.5 8.5 11 C10 10.5 11 12 12.5 11" stroke="#2a5590" stroke-width="1.6" fill="none"/></svg>
<div class="t" style="left:47px;top:457.30px;font-size:15px;line-height:15px;color:#111;font-weight:400;transform:scaleX(0.9860);transform-origin:0 0;">WMS/WMTS</div>
<svg style="position:absolute;left:9px;top:460px" width="5" height="9" viewBox="0 0 5 9"><path d="M0 0 L5 4.5 L0 9 Z" fill="#444"/></svg>
<svg style="position:absolute;left:25px;top:477px" width="16" height="16" viewBox="0 0 16 16"><rect x="1" y="1" width="14" height="14" fill="#6a6a6a"/><path d="M1 5.7 H15 M1 10.3 H15 M5.7 1 V15 M10.3 1 V15" stroke="#fff" stroke-width="1.2"/></svg>
<div class="t" style="left:47px;top:478.30px;font-size:15px;line-height:15px;color:#111;font-weight:400;transform:scaleX(1.0065);transform-origin:0 0;">Vector Tiles</div>
<svg style="position:absolute;left:25px;top:498px" width="16" height="16" viewBox="0 0 16 16"><g fill="#6f98c9"><rect x="1" y="1" width="4" height="4"/><rect x="6" y="1" width="4" height="4"/><rect x="11" y="1" width="4" height="4"/><rect x="1" y="6" width="4" height="4"/><rect x="6" y="6" width="4" height="4"/><rect x="11" y="6" width="4" height="4"/><rect x="1" y="11" width="4" height="4"/><rect x="6" y="11" width="4" height="4"/><rect x="11" y="11" width="4" height="4"/></g></svg>
<div class="t" style="left:47px;top:499.30px;font-size:15px;line-height:15px;color:#111;font-weight:400;transform:scaleX(0.9563);transform-origin:0 0;">XYZ Tiles</div>
<svg style="position:absolute;left:7px;top:504px" width="9" height="5" viewBox="0 0 9 5"><path d="M0 0 H9 L4.5 5 Z" fill="#444"/></svg>
<svg style="position:absolute;left:45px;top:519px" width="16" height="16" viewBox="0 0 16 16"><g fill="#6f98c9"><rect x="1" y="1" width="4" height="4"/><rect x="6" y="1" width="4" height="4"/><rect x="11" y="1" width="4" height="4"/><rect x="1" y="6" width="4" height="4"/><rect x="6" y="6" width="4" height="4"/><rect x="11" y="6" width="4" height="4"/><rect x="1" y="11" width="4" height="4"/><rect x="6" y="11" width="4" height="4"/><rect x="11" y="11" width="4" height="4"/></g></svg>
<div class="t" style="left:67px;top:520.30px;font-size:15px;line-height:15px;color:#111;font-weight:400;transform:scaleX(1.0235);transform-origin:0 0;">apple_iphoto</div>
<svg style="position:absolute;left:45px;top:540px" width="16" height="16" viewBox="0 0 16 16"><g fill="#6f98c9"><rect x="1" y="1" width="4" height="4"/><rect x="6" y="1" width="4" height="4"/><rect x="11" y="1" width="4" height="4"/><rect x="1" y="6" width="4" height="4"/><rect x="6" y="6" width="4" height="4"/><rect x="11" y="6" width="4" height="4"/><rect x="1" y="11" width="4" height="4"/><rect x="6" y="11" width="4" height="4"/><rect x="11" y="11" width="4" height="4"/></g></svg>
<div class="t" style="left:67px;top:541.30px;font-size:15px;line-height:15px;color:#111;font-weight:400;transform:scaleX(0.9859);transform-origin:0 0;">esri World_Light_Gray_Base</div>
<svg style="position:absolute;left:45px;top:561px" width="16" height="16" viewBox="0 0 16 16"><g fill="#6f98c9"><rect x="1" y="1" width="4" height="4"/><rect x="6" y="1" width="4" height="4"/><rect x="11" y="1" width="4" height="4"/><rect x="1" y="6" width="4" height="4"/><rect x="6" y="6" width="4" height="4"/><rect x="11" y="6" width="4" height="4"/><rect x="1" y="11" width="4" height="4"/><rect x="6" y="11" width="4" height="4"/><rect x="11" y="11" width="4" height="4"/></g></svg>
<div class="t" style="left:67px;top:562.30px;font-size:15px;line-height:15px;color:#111;font-weight:400;transform:scaleX(0.9994);transform-origin:0 0;">esri World_Terrain_Base</div>
<svg style="position:absolute;left:45px;top:582px" width="16" height="16" viewBox="0 0 16 16"><g fill="#6f98c9"><rect x="1" y="1" width="4" height="4"/><rect x="6" y="1" width="4" height="4"/><rect x="11" y="1" width="4" height="4"/><rect x="1" y="6" width="4" height="4"/><rect x="6" y="6" width="4" height="4"/><rect x="11" y="6" width="4" height="4"/><rect x="1" y="11" width="4" height="4"/><rect x="6" y="11" width="4" height="4"/><rect x="11" y="11" width="4" height="4"/></g></svg>
<div class="t" style="left:67px;top:583.30px;font-size:15px;line-height:15px;color:#111;font-weight:400;transform:scaleX(0.9849);transform-origin:0 0;">gmaps_sat</div>
<svg style="position:absolute;left:45px;top:603px" width="16" height="16" viewBox="0 0 16 16"><g fill="#6f98c9"><rect x="1" y="1" width="4" height="4"/><rect x="6" y="1" width="4" height="4"/><rect x="11" y="1" width="4" height="4"/><rect x="1" y="6" width="4" height="4"/><rect x="6" y="6" width="4" height="4"/><rect x="11" y="6" width="4" height="4"/><rect x="1" y="11" width="4" height="4"/><rect x="6" y="11" width="4" height="4"/><rect x="11" y="11" width="4" height="4"/></g></svg>
<div class="t" style="left:67px;top:604.30px;font-size:15px;line-height:15px;color:#111;font-weight:400;transform:scaleX(0.9610);transform-origin:0 0;">hydda base</div>
<svg style="position:absolute;left:45px;top:624px" width="16" height="16" viewBox="0 0 16 16"><g fill="#6f98c9"><rect x="1" y="1" width="4" height="4"/><rect x="6" y="1" width="4" height="4"/><rect x="11" y="1" width="4" height="4"/><rect x="1" y="6" width="4" height="4"/><rect x="6" y="6" width="4" height="4"/><rect x="11" y="6" width="4" height="4"/><rect x="1" y="11" width="4" height="4"/><rect x="6" y="11" width="4" height="4"/><rect x="11" y="11" width="4" height="4"/></g></svg>
<div class="t" style="left:67px;top:625.30px;font-size:15px;line-height:15px;color:#111;font-weight:400;transform:scaleX(1.0528);transform-origin:0 0;">maptiler</div>
<svg style="position:absolute;left:45px;top:645px" width="16" height="16" viewBox="0 0 16 16"><g fill="#6f98c9"><rect x="1" y="1" width="4" height="4"/><rect x="6" y="1" width="4" height="4"/><rect x="11" y="1" width="4" height="4"/><rect x="1" y="6" width="4" height="4"/><rect x="6" y="6" width="4" height="4"/><rect x="11" y="6" width="4" height="4"/><rect x="1" y="11" width="4" height="4"/><rect x="6" y="11" width="4" height="4"/><rect x="11" y="11" width="4" height="4"/></g></svg>
<div class="t" style="left:67px;top:646.30px;font-size:15px;line-height:15px;color:#111;font-weight:400;transform:scaleX(1.0057);transform-origin:0 0;">OpenStreetMap</div>
<svg style="position:absolute;left:45px;top:666px" width="16" height="16" viewBox="0 0 16 16"><g fill="#6f98c9"><rect x="1" y="1" width="4" height="4"/><rect x="6" y="1" width="4" height="4"/><rect x="11" y="1" width="4" height="4"/><rect x="1" y="6" width="4" height="4"/><rect x="6" y="6" width="4" height="4"/><rect x="11" y="6" width="4" height="4"/><rect x="1" y="11" width="4" height="4"/><rect x="6" y="11" width="4" height="4"/><rect x="11" y="11" width="4" height="4"/></g></svg>
<div class="t" style="left:67px;top:667.30px;font-size:15px;line-height:15px;color:#111;font-weight:400;transform:scaleX(1.0148);transform-origin:0 0;">openstreetmap2</div>
<svg style="position:absolute;left:45px;top:687px" width="16" height="16" viewBox="0 0 16 16"><g fill="#6f98c9"><rect x="1" y="1" width="4" height="4"/><rect x="6" y="1" width="4" height="4"/><rect x="11" y="1" width="4" height="4"/><rect x="1" y="6" width="4" height="4"/><rect x="6" y="6" width="4" height="4"/><rect x="11" y="6" width="4" height="4"/><rect x="1" y="11" width="4" height="4"/><rect x="6" y="11" width="4" height="4"/><rect x="11" y="11" width="4" height="4"/></g></svg>
<div class="t" style="left:67px;top:688.30px;font-size:15px;line-height:15px;color:#111;font-weight:400;transform:scaleX(1.0157);transform-origin:0 0;">stamen_watercolor</div>
<svg style="position:absolute;left:45px;top:708px" width="16" height="16" viewBox="0 0 16 16"><g fill="#6f98c9"><rect x="1" y="1" width="4" height="4"/><rect x="6" y="1" width="4" height="4"/><rect x="11" y="1" width="4" height="4"/><rect x="1" y="6" width="4" height="4"/><rect x="6" y="6" width="4" height="4"/><rect x="11" y="6" width="4" height="4"/><rect x="1" y="11" width="4" height="4"/><rect x="6" y="11" width="4" height="4"/><rect x="11" y="11" width="4" height="4"/></g></svg>
<div class="t" style="left:67px;top:709.30px;font-size:15px;line-height:15px;color:#111;font-weight:400;transform:scaleX(1.0292);transform-origin:0 0;">swisstopp</div>
<div style="position:absolute;left:2px;top:735px;width:0;height:0"></div>
<div style="position:absolute;left:2px;top:727px;width:433px;height:7px;overflow:hidden">
<svg style="position:absolute;left:43px;top:2px" width="16" height="16" viewBox="0 0 16 16"><g fill="#6f98c9"><rect x="1" y="1" width="4" height="4"/><rect x="6" y="1" width="4" height="4"/><rect x="11" y="1" width="4" height="4"/><rect x="1" y="6" width="4" height="4"/><rect x="6" y="6" width="4" height="4"/><rect x="11" y="6" width="4" height="4"/><rect x="1" y="11" width="4" height="4"/><rect x="6" y="11" width="4" height="4"/><rect x="11" y="11" width="4" height="4"/></g></svg>
<div class="t" style="left:65px;top:3.3px;font-size:15px;line-height:15px;color:#1a1a1a">terrain_background2</div>
</div>
<svg style="position:absolute;left:219px;top:737px" width="18" height="2" viewBox="0 0 18 2"><rect x="0" y="0" width="1" height="1" fill="#b8b8b8"/><rect x="3" y="0" width="1" height="1" fill="#b8b8b8"/><rect x="6" y="0" width="1" height="1" fill="#b8b8b8"/><rect x="9" y="0" width="1" height="1" fill="#b8b8b8"/><rect x="12" y="0" width="1" height="1" fill="#b8b8b8"/><rect x="15" y="0" width="1" height="1" fill="#b8b8b8"/></svg>
<svg style="position:absolute;left:1451px;top:683px" width="2" height="18" viewBox="0 0 2 18"><rect x="0" y="0" width="1" height="1" fill="#b8b8b8"/><rect x="0" y="3" width="1" height="1" fill="#b8b8b8"/><rect x="0" y="6" width="1" height="1" fill="#b8b8b8"/><rect x="0" y="9" width="1" height="1" fill="#b8b8b8"/><rect x="0" y="12" width="1" height="1" fill="#b8b8b8"/><rect x="0" y="15" width="1" height="1" fill="#b8b8b8"/></svg>
<svg style="position:absolute;left:454px;top:683px" width="2" height="18" viewBox="0 0 2 18"><rect x="0" y="0" width="1" height="1" fill="#b8b8b8"/><rect x="0" y="3" width="1" height="1" fill="#b8b8b8"/><rect x="0" y="6" width="1" height="1" fill="#b8b8b8"/><rect x="0" y="9" width="1" height="1" fill="#b8b8b8"/><rect x="0" y="12" width="1" height="1" fill="#b8b8b8"/><rect x="0" y="15" width="1" height="1" fill="#b8b8b8"/></svg>
<div class="t" style="left:5px;top:744.30px;font-size:15px;line-height:15px;color:#111;font-weight:400;transform:scaleX(0.94);transform-origin:0 0;">Layers</div>
<svg style="position:absolute;left:424px;top:746px" width="11" height="11" viewBox="0 0 11 11"><rect x="0.5" y="0.5" width="10" height="10" rx="2.5" fill="none" stroke="#666" stroke-width="1"/><rect x="4.5" y="2.5" width="4" height="4" rx="1" fill="none" stroke="#666" stroke-width="1"/><rect x="2.5" y="4.5" width="4" height="4" rx="1" fill="#efefef" stroke="#666" stroke-width="1"/></svg>
<svg style="position:absolute;left:438px;top:746px" width="11" height="11" viewBox="0 0 11 11"><rect x="0.5" y="0.5" width="10" height="10" rx="2.5" fill="none" stroke="#666" stroke-width="1"/><path d="M3 3 L8 8 M8 3 L3 8" stroke="#555" stroke-width="2"/></svg>
<svg style="position:absolute;left:9px;top:769px" width="16" height="16" viewBox="0 0 16 16"><g transform="rotate(-30 6 11)"><rect x="1" y="8" width="10" height="2.5" fill="#f5c518"/><rect x="1" y="10.5" width="10" height="2.5" fill="#4f8fd4"/><rect x="1" y="13" width="10" height="2.5" fill="#e03a2f"/></g><path d="M8 10 L14.5 2.5" stroke="#c8963a" stroke-width="2.2" stroke-linecap="round"/><path d="M3.5 10 L9 7 L11 11 L6 14.5 Z" fill="#d9b070" stroke="#a57a3a" stroke-width="0.5"/></svg>
<svg style="position:absolute;left:34px;top:769px" width="16" height="16" viewBox="0 0 16 16"><path d="M1.5 5 V15 H11" fill="none" stroke="#999" stroke-width="0.9"/><rect x="4" y="2" width="9" height="10" fill="#f2f2f2" stroke="#888" stroke-width="0.9"/><path d="M8 0.5 V7" stroke="#5b8dc9" stroke-width="1.4"/><circle cx="12.5" cy="12.5" r="3" fill="#cfe3cf" stroke="#3f8f47" stroke-width="1.3"/></svg>
<svg style="position:absolute;left:59px;top:769px" width="16" height="16" viewBox="0 0 16 16"><path d="M0.5 7 C4 2 11 2 15 7 C11 12 4 12 0.5 7 Z" fill="#f2f2f2" stroke="#888" stroke-width="0.9"/><circle cx="7.5" cy="6.5" r="3" fill="#5b8dc9"/><circle cx="7.5" cy="6.5" r="1.2" fill="#222"/><path d="M12 12 H16 L14 14 Z" fill="#555"/></svg>
<svg style="position:absolute;left:84px;top:769px" width="16" height="16" viewBox="0 0 16 16"><path d="M1 1.5 H15 V3 L10 9 V15.5 L6.5 13 V9 L1 3 Z" fill="#6f98c9" stroke="#3d6a9f" stroke-width="0.6"/><rect x="1.5" y="1.5" width="13" height="1.8" fill="#f5d84a"/></svg>
<svg style="position:absolute;left:109px;top:769px" width="16" height="16" viewBox="0 0 16 16"><text x="-0.5" y="11" font-family="Liberation Serif" font-size="16" fill="#6b2f8f">ε</text><path d="M7.5 16 V11 C7.5 9.2 14 9.2 14 11 V16 H12 V13 H9.5 V16 Z" fill="#aaa" stroke="#888" stroke-width="0.6"/></svg>
<svg style="position:absolute;left:146px;top:769px" width="16" height="16" viewBox="0 0 16 16"><path d="M1 2 H6 M2 2 V13 H5 M2 8 H5" stroke="#bbb" stroke-width="0.8" fill="none"/><rect x="3.5" y="5" width="3" height="3" fill="#f7941d"/><rect x="3.5" y="11" width="3" height="3" fill="#f7941d"/><path d="M11 15 L15 10.5 H12.5 V2 H9.5 V10.5 H7 Z" fill="#5b8dc9" stroke="#33638f" stroke-width="0.6"/></svg>
<svg style="position:absolute;left:171px;top:769px" width="16" height="16" viewBox="0 0 16 16"><path d="M1 2 H6 M2 2 V13 H5 M2 8 H5" stroke="#bbb" stroke-width="0.8" fill="none"/><rect x="3.5" y="5" width="3" height="3" fill="#f7941d"/><rect x="3.5" y="11" width="3" height="3" fill="#f7941d"/><path d="M11 1 L15 5.5 H12.5 V13 H9.5 V5.5 H7 Z" fill="#5b8dc9" stroke="#33638f" stroke-width="0.6"/></svg>
<svg style="position:absolute;left:196px;top:769px" width="16" height="16" viewBox="0 0 16 16"><rect x="1" y="1" width="11.5" height="11.5" fill="none" stroke="#777" stroke-width="0.9"/><rect x="9" y="10" width="6.5" height="5" rx="1" fill="#e0161b"/><rect x="10.3" y="12" width="4" height="1.2" fill="#fff"/></svg>
<svg style="position:absolute;left:130px;top:775px" width="8" height="5" viewBox="0 0 8 5"><path d="M0 0 H8 L4 4 Z" fill="#555"/></svg>
<div style="position:absolute;left:1px;top:793px;width:450px;height:374px;background:#fff;border:1px solid #b0b0b0;box-sizing:border-box"></div>
<div style="position:absolute;left:2px;top:794px;width:448px;height:21px;background:#308cc6"></div>
<div style="position:absolute;left:25px;top:797px;width:14px;height:14px;background:#fff;border:1px solid #d6cdc4;box-sizing:border-box"></div>
<svg style="position:absolute;left:27px;top:799px" width="10" height="10" viewBox="0 0 10 10"><path d="M1.5 5 L4 8.5 L8.8 1" fill="none" stroke="#111" stroke-width="1.8"/></svg>
<svg style="position:absolute;left:48px;top:799px" width="10" height="10" viewBox="0 0 10 10"><circle cx="5" cy="5" r="2.9" fill="#62808f" stroke="#3c566a" stroke-width="0.8"/></svg>
<div class="t" style="left:67px;top:797.30px;font-size:15px;line-height:15px;color:#fff;font-weight:700;text-decoration:underline;text-decoration-thickness:1px;text-underline-offset:2px;letter-spacing:-0.5px">points</div>
<div style="position:absolute;left:457px;top:212px;width:991px;height:955px;background:#fff;border:1px solid #b0b0b0;box-sizing:border-box"></div>
<svg style="position:absolute;left:1116px;top:341px" width="8" height="8" viewBox="0 0 8 8"><circle cx="4" cy="4" r="3.4" fill="#7b8a91" stroke="#30383b" stroke-width="1.1"/></svg>
<svg style="position:absolute;left:882px;top:464px" width="8" height="8" viewBox="0 0 8 8"><circle cx="4" cy="4" r="3.4" fill="#7b8a91" stroke="#30383b" stroke-width="1.1"/></svg>
<svg style="position:absolute;left:478px;top:500px" width="8" height="8" viewBox="0 0 8 8"><circle cx="4" cy="4" r="3.4" fill="#7b8a91" stroke="#30383b" stroke-width="1.1"/></svg>
<svg style="position:absolute;left:1380px;top:937px" width="8" height="8" viewBox="0 0 8 8"><circle cx="4" cy="4" r="3.4" fill="#7b8a91" stroke="#30383b" stroke-width="1.1"/></svg>
<svg style="position:absolute;left:1419px;top:1030px" width="8" height="8" viewBox="0 0 8 8"><circle cx="4" cy="4" r="3.4" fill="#7b8a91" stroke="#30383b" stroke-width="1.1"/></svg>
<div class="t" style="left:1458px;top:215.30px;font-size:15px;line-height:15px;color:#111;font-weight:400;">Processing Toolbox</div>
<svg style="position:absolute;left:1894px;top:217px" width="11" height="11" viewBox="0 0 11 11"><rect x="0.5" y="0.5" width="10" height="10" rx="2.5" fill="none" stroke="#666" stroke-width="1"/><rect x="4.5" y="2.5" width="4" height="4" rx="1" fill="none" stroke="#666" stroke-width="1"/><rect x="2.5" y="4.5" width="4" height="4" rx="1" fill="#efefef" stroke="#666" stroke-width="1"/></svg>
<svg style="position:absolute;left:1908px;top:217px" width="11" height="11" viewBox="0 0 11 11"><rect x="0.5" y="0.5" width="10" height="10" rx="2.5" fill="none" stroke="#666" stroke-width="1"/><path d="M3 3 L8 8 M8 3 L3 8" stroke="#555" stroke-width="2"/></svg>
<svg style="position:absolute;left:1463px;top:240px" width="16" height="16" viewBox="0 0 16 16"><circle cx="5.5" cy="5" r="3.3" fill="#d81f1f"/><path d="M8.30 5.00 L10.40 5.00 M7.48 6.98 L8.96 8.46 M5.50 7.80 L5.50 9.90 M3.52 6.98 L2.04 8.46 M2.70 5.00 L0.60 5.00 M3.52 3.02 L2.04 1.54 M5.50 2.20 L5.50 0.10 M7.48 3.02 L8.96 1.54 " stroke="#d81f1f" stroke-width="1.7"/><circle cx="5.5" cy="5" r="1.15" fill="#efefef"/><circle cx="10.5" cy="9.5" r="2.2" fill="#777"/><path d="M12.20 9.50 L14.30 9.50 M11.70 10.70 L13.19 12.19 M10.50 11.20 L10.50 13.30 M9.30 10.70 L7.81 12.19 M8.80 9.50 L6.70 9.50 M9.30 8.30 L7.81 6.81 M10.50 7.80 L10.50 5.70 M11.70 8.30 L13.19 6.81 " stroke="#777" stroke-width="1.1"/><circle cx="10.5" cy="9.5" r="0.77" fill="#efefef"/><circle cx="7" cy="13.5" r="1.8" fill="#8fb2dd"/><path d="M8.30 13.50 L10.40 13.50 M7.92 14.42 L9.40 15.90 M7.00 14.80 L7.00 16.90 M6.08 14.42 L4.60 15.90 M5.70 13.50 L3.60 13.50 M6.08 12.58 L4.60 11.10 M7.00 12.20 L7.00 10.10 M7.92 12.58 L9.40 11.10 " stroke="#8fb2dd" stroke-width="1.0"/><circle cx="7" cy="13.5" r="0.63" fill="#efefef"/><path d="M11.5 14 H15.5 L13.5 16 Z" fill="#333"/></svg>
<svg style="position:absolute;left:1488px;top:240px" width="16" height="16" viewBox="0 0 16 16"><path d="M7 0.5 C4.5 0.5 4 1.5 4 3 V4.5 H7.5 V5.2 H2.5 C1 5.2 0.5 6.5 0.5 8 C0.5 10 1 11 2.5 11 H4 V9 C4 8 5 7 6 7 H9 C10 7 10.5 6.5 10.5 5.5 V3 C10.5 1.5 9.5 0.5 7 0.5 Z" fill="#3a75b0"/><path d="M7.5 14 C10 14 10.5 13 10.5 11.5 V10 H7 V9.3 H12 C13.5 9.3 14 8 14 6.5 C14 4.5 13.5 3.5 12 3.5 H10.5 V5.5 C10.5 6.5 9.5 7.5 8.5 7.5 H5.5 C4.5 7.5 4 8 4 9 V11.5 C4 13 5 14 7.5 14 Z" fill="#f7d23e"/><path d="M11 14 H15 L13 16 Z" fill="#444"/></svg>
<svg style="position:absolute;left:1512px;top:240px" width="16" height="16" viewBox="0 0 16 16"><circle cx="8" cy="8" r="7" fill="#f4f4f4" stroke="#777" stroke-width="1"/><path d="M8 3 V8 L11 10" fill="none" stroke="#777" stroke-width="1.1"/></svg>
<svg style="position:absolute;left:1537px;top:240px" width="16" height="16" viewBox="0 0 16 16"><path d="M3 1 H10 L13 4 V15 H3 Z" fill="#f6f6f6" stroke="#aaa" stroke-width="0.9"/><path d="M5 6 H11 M5 8.5 H11 M5 11 H11" stroke="#aaa" stroke-width="0.9"/></svg>
<svg style="position:absolute;left:1568px;top:240px" width="16" height="16" viewBox="0 0 16 16"><rect x="1" y="1" width="10.5" height="10.5" rx="1.5" fill="#f5df4a" stroke="#c9b02a" stroke-width="0.8"/><path d="M8 15 L9 12 L14.5 4 L16 5 L10.5 13 Z" fill="#f5df4a" stroke="#8a7520" stroke-width="0.6"/></svg>
<svg style="position:absolute;left:1601px;top:240px" width="16" height="16" viewBox="0 0 16 16"><path d="M6.5 6.5 L14.5 14.5" stroke="#7a6a2a" stroke-width="3.4" stroke-linecap="round"/><path d="M6.5 6.5 L14.5 14.5" stroke="#f0d36a" stroke-width="2" stroke-linecap="round"/><path d="M2.2 5.5 A3.6 3.6 0 1 0 5.5 2.2" fill="none" stroke="#666" stroke-width="2.2"/><path d="M2.2 5.5 A3.6 3.6 0 1 0 5.5 2.2" fill="none" stroke="#eee" stroke-width="0.8"/></svg>
<div style="position:absolute;left:1562px;top:241px;width:1px;height:14px;background:#d0d0d0"></div>
<div style="position:absolute;left:1593px;top:241px;width:1px;height:14px;background:#d0d0d0"></div>
<div style="position:absolute;left:1454px;top:264px;width:467px;height:27px;background:#fff;border:1px solid #b0b0b0;border-radius:3px;box-sizing:border-box"></div>
<svg style="position:absolute;left:1462px;top:270px" width="14" height="14" viewBox="0 0 14 14"><circle cx="5.5" cy="5.5" r="4.3" fill="none" stroke="#666" stroke-width="1.3"/><path d="M8.6 8.6 L12.5 12.5" stroke="#666" stroke-width="1.5"/></svg>
<div class="t" style="left:1482px;top:269.80px;font-size:15px;line-height:15px;color:#707070;font-weight:400;">Search…</div>
<div style="position:absolute;left:1454px;top:291px;width:467px;height:876px;background:#fff;border:1px solid #b0b0b0;box-sizing:border-box"></div>
<svg style="position:absolute;left:1463px;top:298px" width="5" height="9" viewBox="0 0 5 9"><path d="M0 0 L5 4.5 L0 9 Z" fill="#444"/></svg>
<svg style="position:absolute;left:1478px;top:294px" width="16" height="16" viewBox="0 0 16 16"><circle cx="8" cy="8" r="7" fill="#f8f8f8" stroke="#888" stroke-width="1"/><path d="M8 3 V8 L11 10" fill="none" stroke="#888" stroke-width="1"/></svg>
<div class="t" style="left:1500px;top:295.30px;font-size:15px;line-height:15px;color:#111;font-weight:400;transform:scaleX(0.9755);transform-origin:0 0;">Recently used</div>
<svg style="position:absolute;left:1463px;top:319px" width="5" height="9" viewBox="0 0 5 9"><path d="M0 0 L5 4.5 L0 9 Z" fill="#444"/></svg>
<svg style="position:absolute;left:1478px;top:315px" width="16" height="16" viewBox="0 0 16 16"><path d="M8 1 C4 1 1 4 1 8 C1 12 4 15 8 15 C9.5 15 11 14.5 12 13.7 L14 15.5 L15.5 14 L13.5 12 C14.5 11 15 9.5 15 8 C15 4 12 1 8 1 Z M8 3.8 C10.3 3.8 12.2 5.7 12.2 8 C12.2 8.9 11.9 9.8 11.4 10.5 L9.5 8.6 L8.2 9.9 L10.1 11.8 C9.5 12.1 8.8 12.2 8 12.2 C5.7 12.2 3.8 10.3 3.8 8 C3.8 5.7 5.7 3.8 8 3.8 Z" fill="#6aa42f"/><circle cx="8.5" cy="8.5" r="2.3" fill="#f0b323"/><path d="M7.6 7.6 L11 11" stroke="#ee6a21" stroke-width="1.4"/></svg>
<div class="t" style="left:1500px;top:316.30px;font-size:15px;line-height:15px;color:#111;font-weight:400;transform:scaleX(1.0134);transform-origin:0 0;">Cartography</div>
<svg style="position:absolute;left:1463px;top:340px" width="5" height="9" viewBox="0 0 5 9"><path d="M0 0 L5 4.5 L0 9 Z" fill="#444"/></svg>
<svg style="position:absolute;left:1478px;top:336px" width="16" height="16" viewBox="0 0 16 16"><path d="M8 1 C4 1 1 4 1 8 C1 12 4 15 8 15 C9.5 15 11 14.5 12 13.7 L14 15.5 L15.5 14 L13.5 12 C14.5 11 15 9.5 15 8 C15 4 12 1 8 1 Z M8 3.8 C10.3 3.8 12.2 5.7 12.2 8 C12.2 8.9 11.9 9.8 11.4 10.5 L9.5 8.6 L8.2 9.9 L10.1 11.8 C9.5 12.1 8.8 12.2 8 12.2 C5.7 12.2 3.8 10.3 3.8 8 C3.8 5.7 5.7 3.8 8 3.8 Z" fill="#6aa42f"/><circle cx="8.5" cy="8.5" r="2.3" fill="#f0b323"/><path d="M7.6 7.6 L11 11" stroke="#ee6a21" stroke-width="1.4"/></svg>
<div class="t" style="left:1500px;top:337.30px;font-size:15px;line-height:15px;color:#111;font-weight:400;transform:scaleX(0.9703);transform-origin:0 0;">Database</div>
<svg style="position:absolute;left:1463px;top:361px" width="5" height="9" viewBox="0 0 5 9"><path d="M0 0 L5 4.5 L0 9 Z" fill="#444"/></svg>
<svg style="position:absolute;left:1478px;top:357px" width="16" height="16" viewBox="0 0 16 16"><path d="M8 1 C4 1 1 4 1 8 C1 12 4 15 8 15 C9.5 15 11 14.5 12 13.7 L14 15.5 L15.5 14 L13.5 12 C14.5 11 15 9.5 15 8 C15 4 12 1 8 1 Z M8 3.8 C10.3 3.8 12.2 5.7 12.2 8 C12.2 8.9 11.9 9.8 11.4 10.5 L9.5 8.6 L8.2 9.9 L10.1 11.8 C9.5 12.1 8.8 12.2 8 12.2 C5.7 12.2 3.8 10.3 3.8 8 C3.8 5.7 5.7 3.8 8 3.8 Z" fill="#6aa42f"/><circle cx="8.5" cy="8.5" r="2.3" fill="#f0b323"/><path d="M7.6 7.6 L11 11" stroke="#ee6a21" stroke-width="1.4"/></svg>
<div class="t" style="left:1500px;top:358.30px;font-size:15px;line-height:15px;color:#111;font-weight:400;transform:scaleX(1.0033);transform-origin:0 0;">File tools</div>
<svg style="position:absolute;left:1463px;top:382px" width="5" height="9" viewBox="0 0 5 9"><path d="M0 0 L5 4.5 L0 9 Z" fill="#444"/></svg>
<svg style="position:absolute;left:1478px;top:378px" width="16" height="16" viewBox="0 0 16 16"><path d="M8 1 C4 1 1 4 1 8 C1 12 4 15 8 15 C9.5 15 11 14.5 12 13.7 L14 15.5 L15.5 14 L13.5 12 C14.5 11 15 9.5 15 8 C15 4 12 1 8 1 Z M8 3.8 C10.3 3.8 12.2 5.7 12.2 8 C12.2 8.9 11.9 9.8 11.4 10.5 L9.5 8.6 L8.2 9.9 L10.1 11.8 C9.5 12.1 8.8 12.2 8 12.2 C5.7 12.2 3.8 10.3 3.8 8 C3.8 5.7 5.7 3.8 8 3.8 Z" fill="#6aa42f"/><circle cx="8.5" cy="8.5" r="2.3" fill="#f0b323"/><path d="M7.6 7.6 L11 11" stroke="#ee6a21" stroke-width="1.4"/></svg>
<div class="t" style="left:1500px;top:379.30px;font-size:15px;line-height:15px;color:#111;font-weight:400;transform:scaleX(1.0451);transform-origin:0 0;">Interpolation</div>
<svg style="position:absolute;left:1463px;top:403px" width="5" height="9" viewBox="0 0 5 9"><path d="M0 0 L5 4.5 L0 9 Z" fill="#444"/></svg>
<svg style="position:absolute;left:1478px;top:399px" width="16" height="16" viewBox="0 0 16 16"><path d="M8 1 C4 1 1 4 1 8 C1 12 4 15 8 15 C9.5 15 11 14.5 12 13.7 L14 15.5 L15.5 14 L13.5 12 C14.5 11 15 9.5 15 8 C15 4 12 1 8 1 Z M8 3.8 C10.3 3.8 12.2 5.7 12.2 8 C12.2 8.9 11.9 9.8 11.4 10.5 L9.5 8.6 L8.2 9.9 L10.1 11.8 C9.5 12.1 8.8 12.2 8 12.2 C5.7 12.2 3.8 10.3 3.8 8 C3.8 5.7 5.7 3.8 8 3.8 Z" fill="#6aa42f"/><circle cx="8.5" cy="8.5" r="2.3" fill="#f0b323"/><path d="M7.6 7.6 L11 11" stroke="#ee6a21" stroke-width="1.4"/></svg>
<div class="t" style="left:1500px;top:400.30px;font-size:15px;line-height:15px;color:#111;font-weight:400;transform:scaleX(0.9945);transform-origin:0 0;">Layer tools</div>
<svg style="position:absolute;left:1463px;top:424px" width="5" height="9" viewBox="0 0 5 9"><path d="M0 0 L5 4.5 L0 9 Z" fill="#444"/></svg>
<svg style="position:absolute;left:1478px;top:420px" width="16" height="16" viewBox="0 0 16 16"><path d="M8 1 C4 1 1 4 1 8 C1 12 4 15 8 15 C9.5 15 11 14.5 12 13.7 L14 15.5 L15.5 14 L13.5 12 C14.5 11 15 9.5 15 8 C15 4 12 1 8 1 Z M8 3.8 C10.3 3.8 12.2 5.7 12.2 8 C12.2 8.9 11.9 9.8 11.4 10.5 L9.5 8.6 L8.2 9.9 L10.1 11.8 C9.5 12.1 8.8 12.2 8 12.2 C5.7 12.2 3.8 10.3 3.8 8 C3.8 5.7 5.7 3.8 8 3.8 Z" fill="#6aa42f"/><circle cx="8.5" cy="8.5" r="2.3" fill="#f0b323"/><path d="M7.6 7.6 L11 11" stroke="#ee6a21" stroke-width="1.4"/></svg>
<div class="t" style="left:1500px;top:421.30px;font-size:15px;line-height:15px;color:#111;font-weight:400;transform:scaleX(1.0071);transform-origin:0 0;">Network analysis</div>
<svg style="position:absolute;left:1463px;top:445px" width="5" height="9" viewBox="0 0 5 9"><path d="M0 0 L5 4.5 L0 9 Z" fill="#444"/></svg>
<svg style="position:absolute;left:1478px;top:441px" width="16" height="16" viewBox="0 0 16 16"><path d="M8 1 C4 1 1 4 1 8 C1 12 4 15 8 15 C9.5 15 11 14.5 12 13.7 L14 15.5 L15.5 14 L13.5 12 C14.5 11 15 9.5 15 8 C15 4 12 1 8 1 Z M8 3.8 C10.3 3.8 12.2 5.7 12.2 8 C12.2 8.9 11.9 9.8 11.4 10.5 L9.5 8.6 L8.2 9.9 L10.1 11.8 C9.5 12.1 8.8 12.2 8 12.2 C5.7 12.2 3.8 10.3 3.8 8 C3.8 5.7 5.7 3.8 8 3.8 Z" fill="#6aa42f"/><circle cx="8.5" cy="8.5" r="2.3" fill="#f0b323"/><path d="M7.6 7.6 L11 11" stroke="#ee6a21" stroke-width="1.4"/></svg>
<div class="t" style="left:1500px;top:442.30px;font-size:15px;line-height:15px;color:#111;font-weight:400;transform:scaleX(1.0061);transform-origin:0 0;">Plots</div>
<svg style="position:absolute;left:1463px;top:466px" width="5" height="9" viewBox="0 0 5 9"><path d="M0 0 L5 4.5 L0 9 Z" fill="#444"/></svg>
<svg style="position:absolute;left:1478px;top:462px" width="16" height="16" viewBox="0 0 16 16"><path d="M8 1 C4 1 1 4 1 8 C1 12 4 15 8 15 C9.5 15 11 14.5 12 13.7 L14 15.5 L15.5 14 L13.5 12 C14.5 11 15 9.5 15 8 C15 4 12 1 8 1 Z M8 3.8 C10.3 3.8 12.2 5.7 12.2 8 C12.2 8.9 11.9 9.8 11.4 10.5 L9.5 8.6 L8.2 9.9 L10.1 11.8 C9.5 12.1 8.8 12.2 8 12.2 C5.7 12.2 3.8 10.3 3.8 8 C3.8 5.7 5.7 3.8 8 3.8 Z" fill="#6aa42f"/><circle cx="8.5" cy="8.5" r="2.3" fill="#f0b323"/><path d="M7.6 7.6 L11 11" stroke="#ee6a21" stroke-width="1.4"/></svg>
<div class="t" style="left:1500px;top:463.30px;font-size:15px;line-height:15px;color:#111;font-weight:400;transform:scaleX(0.9686);transform-origin:0 0;">Raster analysis</div>
<svg style="position:absolute;left:1463px;top:487px" width="5" height="9" viewBox="0 0 5 9"><path d="M0 0 L5 4.5 L0 9 Z" fill="#444"/></svg>
<svg style="position:absolute;left:1478px;top:483px" width="16" height="16" viewBox="0 0 16 16"><path d="M8 1 C4 1 1 4 1 8 C1 12 4 15 8 15 C9.5 15 11 14.5 12 13.7 L14 15.5 L15.5 14 L13.5 12 C14.5 11 15 9.5 15 8 C15 4 12 1 8 1 Z M8 3.8 C10.3 3.8 12.2 5.7 12.2 8 C12.2 8.9 11.9 9.8 11.4 10.5 L9.5 8.6 L8.2 9.9 L10.1 11.8 C9.5 12.1 8.8 12.2 8 12.2 C5.7 12.2 3.8 10.3 3.8 8 C3.8 5.7 5.7 3.8 8 3.8 Z" fill="#6aa42f"/><circle cx="8.5" cy="8.5" r="2.3" fill="#f0b323"/><path d="M7.6 7.6 L11 11" stroke="#ee6a21" stroke-width="1.4"/></svg>
<div class="t" style="left:1500px;top:484.30px;font-size:15px;line-height:15px;color:#111;font-weight:400;transform:scaleX(0.9861);transform-origin:0 0;">Raster creation</div>
<svg style="position:absolute;left:1463px;top:508px" width="5" height="9" viewBox="0 0 5 9"><path d="M0 0 L5 4.5 L0 9 Z" fill="#444"/></svg>
<svg style="position:absolute;left:1478px;top:504px" width="16" height="16" viewBox="0 0 16 16"><path d="M8 1 C4 1 1 4 1 8 C1 12 4 15 8 15 C9.5 15 11 14.5 12 13.7 L14 15.5 L15.5 14 L13.5 12 C14.5 11 15 9.5 15 8 C15 4 12 1 8 1 Z M8 3.8 C10.3 3.8 12.2 5.7 12.2 8 C12.2 8.9 11.9 9.8 11.4 10.5 L9.5 8.6 L8.2 9.9 L10.1 11.8 C9.5 12.1 8.8 12.2 8 12.2 C5.7 12.2 3.8 10.3 3.8 8 C3.8 5.7 5.7 3.8 8 3.8 Z" fill="#6aa42f"/><circle cx="8.5" cy="8.5" r="2.3" fill="#f0b323"/><path d="M7.6 7.6 L11 11" stroke="#ee6a21" stroke-width="1.4"/></svg>
<div class="t" style="left:1500px;top:505.30px;font-size:15px;line-height:15px;color:#111;font-weight:400;transform:scaleX(0.9839);transform-origin:0 0;">Raster terrain analysis</div>
<svg style="position:absolute;left:1463px;top:529px" width="5" height="9" viewBox="0 0 5 9"><path d="M0 0 L5 4.5 L0 9 Z" fill="#444"/></svg>
<svg style="position:absolute;left:1478px;top:525px" width="16" height="16" viewBox="0 0 16 16"><path d="M8 1 C4 1 1 4 1 8 C1 12 4 15 8 15 C9.5 15 11 14.5 12 13.7 L14 15.5 L15.5 14 L13.5 12 C14.5 11 15 9.5 15 8 C15 4 12 1 8 1 Z M8 3.8 C10.3 3.8 12.2 5.7 12.2 8 C12.2 8.9 11.9 9.8 11.4 10.5 L9.5 8.6 L8.2 9.9 L10.1 11.8 C9.5 12.1 8.8 12.2 8 12.2 C5.7 12.2 3.8 10.3 3.8 8 C3.8 5.7 5.7 3.8 8 3.8 Z" fill="#6aa42f"/><circle cx="8.5" cy="8.5" r="2.3" fill="#f0b323"/><path d="M7.6 7.6 L11 11" stroke="#ee6a21" stroke-width="1.4"/></svg>
<div class="t" style="left:1500px;top:526.30px;font-size:15px;line-height:15px;color:#111;font-weight:400;transform:scaleX(0.9875);transform-origin:0 0;">Raster tools</div>
<svg style="position:absolute;left:1463px;top:550px" width="5" height="9" viewBox="0 0 5 9"><path d="M0 0 L5 4.5 L0 9 Z" fill="#444"/></svg>
<svg style="position:absolute;left:1478px;top:546px" width="16" height="16" viewBox="0 0 16 16"><path d="M8 1 C4 1 1 4 1 8 C1 12 4 15 8 15 C9.5 15 11 14.5 12 13.7 L14 15.5 L15.5 14 L13.5 12 C14.5 11 15 9.5 15 8 C15 4 12 1 8 1 Z M8 3.8 C10.3 3.8 12.2 5.7 12.2 8 C12.2 8.9 11.9 9.8 11.4 10.5 L9.5 8.6 L8.2 9.9 L10.1 11.8 C9.5 12.1 8.8 12.2 8 12.2 C5.7 12.2 3.8 10.3 3.8 8 C3.8 5.7 5.7 3.8 8 3.8 Z" fill="#6aa42f"/><circle cx="8.5" cy="8.5" r="2.3" fill="#f0b323"/><path d="M7.6 7.6 L11 11" stroke="#ee6a21" stroke-width="1.4"/></svg>
<div class="t" style="left:1500px;top:547.30px;font-size:15px;line-height:15px;color:#111;font-weight:400;transform:scaleX(0.9822);transform-origin:0 0;">Vector analysis</div>
<svg style="position:absolute;left:1463px;top:571px" width="5" height="9" viewBox="0 0 5 9"><path d="M0 0 L5 4.5 L0 9 Z" fill="#444"/></svg>
<svg style="position:absolute;left:1478px;top:567px" width="16" height="16" viewBox="0 0 16 16"><path d="M8 1 C4 1 1 4 1 8 C1 12 4 15 8 15 C9.5 15 11 14.5 12 13.7 L14 15.5 L15.5 14 L13.5 12 C14.5 11 15 9.5 15 8 C15 4 12 1 8 1 Z M8 3.8 C10.3 3.8 12.2 5.7 12.2 8 C12.2 8.9 11.9 9.8 11.4 10.5 L9.5 8.6 L8.2 9.9 L10.1 11.8 C9.5 12.1 8.8 12.2 8 12.2 C5.7 12.2 3.8 10.3 3.8 8 C3.8 5.7 5.7 3.8 8 3.8 Z" fill="#6aa42f"/><circle cx="8.5" cy="8.5" r="2.3" fill="#f0b323"/><path d="M7.6 7.6 L11 11" stroke="#ee6a21" stroke-width="1.4"/></svg>
<div class="t" style="left:1500px;top:568.30px;font-size:15px;line-height:15px;color:#111;font-weight:400;transform:scaleX(1.0172);transform-origin:0 0;">Vector creation</div>
<svg style="position:absolute;left:1463px;top:592px" width="5" height="9" viewBox="0 0 5 9"><path d="M0 0 L5 4.5 L0 9 Z" fill="#444"/></svg>
<svg style="position:absolute;left:1478px;top:588px" width="16" height="16" viewBox="0 0 16 16"><path d="M8 1 C4 1 1 4 1 8 C1 12 4 15 8 15 C9.5 15 11 14.5 12 13.7 L14 15.5 L15.5 14 L13.5 12 C14.5 11 15 9.5 15 8 C15 4 12 1 8 1 Z M8 3.8 C10.3 3.8 12.2 5.7 12.2 8 C12.2 8.9 11.9 9.8 11.4 10.5 L9.5 8.6 L8.2 9.9 L10.1 11.8 C9.5 12.1 8.8 12.2 8 12.2 C5.7 12.2 3.8 10.3 3.8 8 C3.8 5.7 5.7 3.8 8 3.8 Z" fill="#6aa42f"/><circle cx="8.5" cy="8.5" r="2.3" fill="#f0b323"/><path d="M7.6 7.6 L11 11" stroke="#ee6a21" stroke-width="1.4"/></svg>
<div class="t" style="left:1500px;top:589.30px;font-size:15px;line-height:15px;color:#111;font-weight:400;transform:scaleX(1.0073);transform-origin:0 0;">Vector general</div>
<svg style="position:absolute;left:1463px;top:613px" width="5" height="9" viewBox="0 0 5 9"><path d="M0 0 L5 4.5 L0 9 Z" fill="#444"/></svg>
<svg style="position:absolute;left:1478px;top:609px" width="16" height="16" viewBox="0 0 16 16"><path d="M8 1 C4 1 1 4 1 8 C1 12 4 15 8 15 C9.5 15 11 14.5 12 13.7 L14 15.5 L15.5 14 L13.5 12 C14.5 11 15 9.5 15 8 C15 4 12 1 8 1 Z M8 3.8 C10.3 3.8 12.2 5.7 12.2 8 C12.2 8.9 11.9 9.8 11.4 10.5 L9.5 8.6 L8.2 9.9 L10.1 11.8 C9.5 12.1 8.8 12.2 8 12.2 C5.7 12.2 3.8 10.3 3.8 8 C3.8 5.7 5.7 3.8 8 3.8 Z" fill="#6aa42f"/><circle cx="8.5" cy="8.5" r="2.3" fill="#f0b323"/><path d="M7.6 7.6 L11 11" stroke="#ee6a21" stroke-width="1.4"/></svg>
<div class="t" style="left:1500px;top:610.30px;font-size:15px;line-height:15px;color:#111;font-weight:400;transform:scaleX(1.0183);transform-origin:0 0;">Vector geometry</div>
<svg style="position:absolute;left:1463px;top:634px" width="5" height="9" viewBox="0 0 5 9"><path d="M0 0 L5 4.5 L0 9 Z" fill="#444"/></svg>
<svg style="position:absolute;left:1478px;top:630px" width="16" height="16" viewBox="0 0 16 16"><path d="M8 1 C4 1 1 4 1 8 C1 12 4 15 8 15 C9.5 15 11 14.5 12 13.7 L14 15.5 L15.5 14 L13.5 12 C14.5 11 15 9.5 15 8 C15 4 12 1 8 1 Z M8 3.8 C10.3 3.8 12.2 5.7 12.2 8 C12.2 8.9 11.9 9.8 11.4 10.5 L9.5 8.6 L8.2 9.9 L10.1 11.8 C9.5 12.1 8.8 12.2 8 12.2 C5.7 12.2 3.8 10.3 3.8 8 C3.8 5.7 5.7 3.8 8 3.8 Z" fill="#6aa42f"/><circle cx="8.5" cy="8.5" r="2.3" fill="#f0b323"/><path d="M7.6 7.6 L11 11" stroke="#ee6a21" stroke-width="1.4"/></svg>
<div class="t" style="left:1500px;top:631.30px;font-size:15px;line-height:15px;color:#111;font-weight:400;transform:scaleX(1.0021);transform-origin:0 0;">Vector overlay</div>
<svg style="position:absolute;left:1463px;top:655px" width="5" height="9" viewBox="0 0 5 9"><path d="M0 0 L5 4.5 L0 9 Z" fill="#444"/></svg>
<svg style="position:absolute;left:1478px;top:651px" width="16" height="16" viewBox="0 0 16 16"><path d="M8 1 C4 1 1 4 1 8 C1 12 4 15 8 15 C9.5 15 11 14.5 12 13.7 L14 15.5 L15.5 14 L13.5 12 C14.5 11 15 9.5 15 8 C15 4 12 1 8 1 Z M8 3.8 C10.3 3.8 12.2 5.7 12.2 8 C12.2 8.9 11.9 9.8 11.4 10.5 L9.5 8.6 L8.2 9.9 L10.1 11.8 C9.5 12.1 8.8 12.2 8 12.2 C5.7 12.2 3.8 10.3 3.8 8 C3.8 5.7 5.7 3.8 8 3.8 Z" fill="#6aa42f"/><circle cx="8.5" cy="8.5" r="2.3" fill="#f0b323"/><path d="M7.6 7.6 L11 11" stroke="#ee6a21" stroke-width="1.4"/></svg>
<div class="t" style="left:1500px;top:652.30px;font-size:15px;line-height:15px;color:#111;font-weight:400;transform:scaleX(1.0143);transform-origin:0 0;">Vector selection</div>
<svg style="position:absolute;left:1463px;top:676px" width="5" height="9" viewBox="0 0 5 9"><path d="M0 0 L5 4.5 L0 9 Z" fill="#444"/></svg>
<svg style="position:absolute;left:1478px;top:672px" width="16" height="16" viewBox="0 0 16 16"><path d="M8 1 C4 1 1 4 1 8 C1 12 4 15 8 15 C9.5 15 11 14.5 12 13.7 L14 15.5 L15.5 14 L13.5 12 C14.5 11 15 9.5 15 8 C15 4 12 1 8 1 Z M8 3.8 C10.3 3.8 12.2 5.7 12.2 8 C12.2 8.9 11.9 9.8 11.4 10.5 L9.5 8.6 L8.2 9.9 L10.1 11.8 C9.5 12.1 8.8 12.2 8 12.2 C5.7 12.2 3.8 10.3 3.8 8 C3.8 5.7 5.7 3.8 8 3.8 Z" fill="#6aa42f"/><circle cx="8.5" cy="8.5" r="2.3" fill="#f0b323"/><path d="M7.6 7.6 L11 11" stroke="#ee6a21" stroke-width="1.4"/></svg>
<div class="t" style="left:1500px;top:673.30px;font-size:15px;line-height:15px;color:#111;font-weight:400;transform:scaleX(1.0152);transform-origin:0 0;">Vector table</div>
<svg style="position:absolute;left:1463px;top:697px" width="5" height="9" viewBox="0 0 5 9"><path d="M0 0 L5 4.5 L0 9 Z" fill="#444"/></svg>
<svg style="position:absolute;left:1478px;top:693px" width="16" height="16" viewBox="0 0 16 16"><path d="M8 1 C4 1 1 4 1 8 C1 12 4 15 8 15 C9.5 15 11 14.5 12 13.7 L14 15.5 L15.5 14 L13.5 12 C14.5 11 15 9.5 15 8 C15 4 12 1 8 1 Z M8 3.8 C10.3 3.8 12.2 5.7 12.2 8 C12.2 8.9 11.9 9.8 11.4 10.5 L9.5 8.6 L8.2 9.9 L10.1 11.8 C9.5 12.1 8.8 12.2 8 12.2 C5.7 12.2 3.8 10.3 3.8 8 C3.8 5.7 5.7 3.8 8 3.8 Z" fill="#6aa42f"/><circle cx="8.5" cy="8.5" r="2.3" fill="#f0b323"/><path d="M7.6 7.6 L11 11" stroke="#ee6a21" stroke-width="1.4"/></svg>
<div class="t" style="left:1500px;top:694.30px;font-size:15px;line-height:15px;color:#111;font-weight:400;transform:scaleX(1.0205);transform-origin:0 0;">Vector tiles</div>
<svg style="position:absolute;left:1463px;top:718px" width="5" height="9" viewBox="0 0 5 9"><path d="M0 0 L5 4.5 L0 9 Z" fill="#444"/></svg>
<svg style="position:absolute;left:1478px;top:714px" width="16" height="16" viewBox="0 0 16 16"><circle cx="9.5" cy="8" r="6" fill="#5bb5e0"/><path d="M6 6 C8 5 9 8 12 7" stroke="#3a7a3a" stroke-width="1.4" fill="none"/><path d="M2 2 L8 6 M3 0.5 L6 3" stroke="#222" stroke-width="0.9"/><text x="0.2" y="15.5" font-family="Liberation Sans" font-weight="700" font-size="6.5" fill="#111" textLength="15.5">GDAL</text></svg>
<div class="t" style="left:1500px;top:715.30px;font-size:15px;line-height:15px;color:#111;font-weight:400;transform:scaleX(0.9525);transform-origin:0 0;">GDAL</div>
<svg style="position:absolute;left:1463px;top:739px" width="5" height="9" viewBox="0 0 5 9"><path d="M0 0 L5 4.5 L0 9 Z" fill="#444"/></svg>
<svg style="position:absolute;left:1478px;top:735px" width="16" height="16" viewBox="0 0 16 16"><path d="M8 0.5 L14.5 7.5 L8 14.5 L1.5 7.5 Z" fill="#f4f4f4" stroke="#888" stroke-width="0.8"/><path d="M8 13 C6 10 4 8 4 6 M8 13 C10 10 12 8 12 6 M8 13 V4" stroke="#3a9a3a" stroke-width="1.4" fill="none"/><path d="M2 15.5 H14" stroke="#666" stroke-width="0.8"/></svg>
<div class="t" style="left:1500px;top:736.30px;font-size:15px;line-height:15px;color:#111;font-weight:400;transform:scaleX(0.8788);transform-origin:0 0;">GRASS</div>
<div style="position:absolute;left:5px;top:1170px;width:266px;height:27px;background:#fff;border:1px solid #b0b0b0;border-radius:3px;box-sizing:border-box"></div>
<svg style="position:absolute;left:13px;top:1176px" width="14" height="14" viewBox="0 0 14 14"><circle cx="5.5" cy="5.5" r="4.3" fill="none" stroke="#666" stroke-width="1.3"/><path d="M8.6 8.6 L12.5 12.5" stroke="#666" stroke-width="1.5"/></svg>
<div class="t" style="left:34px;top:1175.80px;font-size:15px;line-height:15px;color:#6a6a6a;font-weight:400;">Type to locate (Ctrl+K)</div>
<div class="t" style="left:988.5px;top:1177.64px;font-size:12px;line-height:12px;color:#111;font-weight:400;">Coordinate</div>
<div style="position:absolute;left:1051px;top:1172px;width:130px;height:23px;background:#fff;border:1px solid #b0b0b0;border-radius:3px;box-sizing:border-box"></div>
<div class="t" style="left:1060px;top:1177.64px;font-size:12px;line-height:12px;color:#111;font-weight:400;">7.434170,46.953353</div>
<svg style="position:absolute;left:1184px;top:1174px" width="18" height="18" viewBox="0 0 18 18"><g transform="rotate(-35 8 8)"><ellipse cx="8" cy="7.5" rx="4.3" ry="6.3" fill="#fff" stroke="#111" stroke-width="1.3"/><path d="M8 1.5 V7 M4 7 H12" stroke="#111" stroke-width="1"/><rect x="5.5" y="2.5" width="1.8" height="3.8" fill="#333"/></g><circle cx="10.5" cy="13" r="3.8" fill="#fff" stroke="#111" stroke-width="1.2" stroke-dasharray="1.6 0.8"/><circle cx="10.5" cy="13" r="1.2" fill="none" stroke="#111" stroke-width="0.9"/><path d="M14 4 L15.5 2.5 M1.5 13.5 L3 13" stroke="#222" stroke-width="0.9"/></svg>
<div class="t" style="left:1214px;top:1177.64px;font-size:12px;line-height:12px;color:#111;font-weight:400;">Scale</div>
<div style="position:absolute;left:1246px;top:1171px;width:101px;height:26px;background:#fff;border:1px solid #b0b0b0;border-radius:3px;box-sizing:border-box"></div>
<div style="position:absolute;left:1326px;top:1172px;width:1px;height:24px;background:#c8c8c8"></div>
<div class="t" style="left:1250px;top:1177.64px;font-size:12px;line-height:12px;color:#111;font-weight:400;">1:1803</div>
<svg style="position:absolute;left:1331px;top:1181px" width="9" height="5" viewBox="0 0 9 5"><path d="M0 0 H9 L4.5 5 Z" fill="#555"/></svg>
<svg style="position:absolute;left:1359px;top:1176px" width="12" height="16" viewBox="0 0 12 16"><path d="M3 7 V4.5 C3 1.5 9 1.5 9 4.5 V7" fill="none" stroke="#555" stroke-width="1.8"/><rect x="0.5" y="7" width="11" height="8.5" rx="1.5" fill="#555"/></svg>
<div class="t" style="left:1380px;top:1178.34px;font-size:12px;line-height:12px;color:#111;font-weight:400;">Magnifier</div>
<div style="position:absolute;left:1434px;top:1171px;width:94px;height:26px;background:#fff;border:1px solid #b0b0b0;border-radius:3px;box-sizing:border-box"></div>
<div style="position:absolute;left:1514px;top:1172px;width:1px;height:24px;background:#c8c8c8"></div>
<div class="t" style="left:1438.5px;top:1178.34px;font-size:12px;line-height:12px;color:#111;font-weight:400;">100%</div>
<svg style="position:absolute;left:1517px;top:1176px" width="9" height="16" viewBox="0 0 9 16"><path d="M0.5 5 L4.5 1 L8.5 5 Z M0.5 11 L4.5 15 L8.5 11 Z" fill="#555"/></svg>
<div class="t" style="left:1538px;top:1178.34px;font-size:12px;line-height:12px;color:#111;font-weight:400;">Rotation</div>
<div style="position:absolute;left:1593px;top:1171px;width:94px;height:26px;background:#fff;border:1px solid #b0b0b0;border-radius:3px;box-sizing:border-box"></div>
<div style="position:absolute;left:1673px;top:1172px;width:1px;height:24px;background:#c8c8c8"></div>
<div class="t" style="left:1598px;top:1177.64px;font-size:12px;line-height:12px;color:#111;font-weight:400;">0.0 °</div>
<svg style="position:absolute;left:1676px;top:1176px" width="9" height="16" viewBox="0 0 9 16"><path d="M0.5 5 L4.5 1 L8.5 5 Z M0.5 11 L4.5 15 L8.5 11 Z" fill="#555"/></svg>
<div style="position:absolute;left:1694px;top:1176px;width:14px;height:14px;background:#fff;border:1px solid #9a9a9a;box-sizing:border-box"></div>
<svg style="position:absolute;left:1696px;top:1178px" width="10" height="10" viewBox="0 0 10 10"><path d="M1.5 5 L4 8.5 L8.8 1" fill="none" stroke="#111" stroke-width="1.8"/></svg>
<div class="t" style="left:1713px;top:1178.24px;font-size:12px;line-height:12px;color:#111;font-weight:400;">Render</div>
<svg style="position:absolute;left:1767px;top:1175px" width="16" height="16" viewBox="0 0 16 16"><circle cx="8" cy="8" r="6.5" fill="none" stroke="#777" stroke-width="1"/><ellipse cx="8" cy="8" rx="3" ry="6.5" fill="none" stroke="#777" stroke-width="0.9"/><path d="M1.5 8 H14.5 M2.5 5 H13.5 M2.5 11 H13.5 M8 1.5 V14.5" stroke="#777" stroke-width="0.9"/></svg>
<div class="t" style="left:1785px;top:1178.44px;font-size:12px;line-height:12px;color:#111;font-weight:400;letter-spacing:-0.38px;">EPSG:4326</div>
<svg style="position:absolute;left:1868px;top:1175px" width="17" height="17" viewBox="0 0 17 17"><path d="M8.5 1 C13 1 16 3.5 16 7 C16 10.5 13 13 8.5 13 L7 13 L11 16 C6 16 3 14.5 2 12.5 C1 11 1 9 1 7 C1 3.5 4 1 8.5 1 Z" fill="#555"/><circle cx="5" cy="7" r="1.2" fill="#fff"/><circle cx="8.5" cy="7" r="1.2" fill="#fff"/><circle cx="12" cy="7" r="1.2" fill="#fff"/></svg>
<svg style="position:absolute;left:1897px;top:1173px" width="22" height="22" viewBox="0 0 22 22"><path d="M2 8 H7 V5 C7 3 10 3 10 5 V8 H14 V12 C16 12 16 15 14 15 V19 H2 Z" fill="#cfd4cf" stroke="#555" stroke-width="1"/><path d="M4 19 L13 9 M13 19 L4 9" stroke="#555" stroke-width="0.8"/><path d="M15 6 C19 4 21 7 19 9 C18 11 20 12 21 11" fill="none" stroke="#555" stroke-width="1.2"/></svg>
</body></html>
